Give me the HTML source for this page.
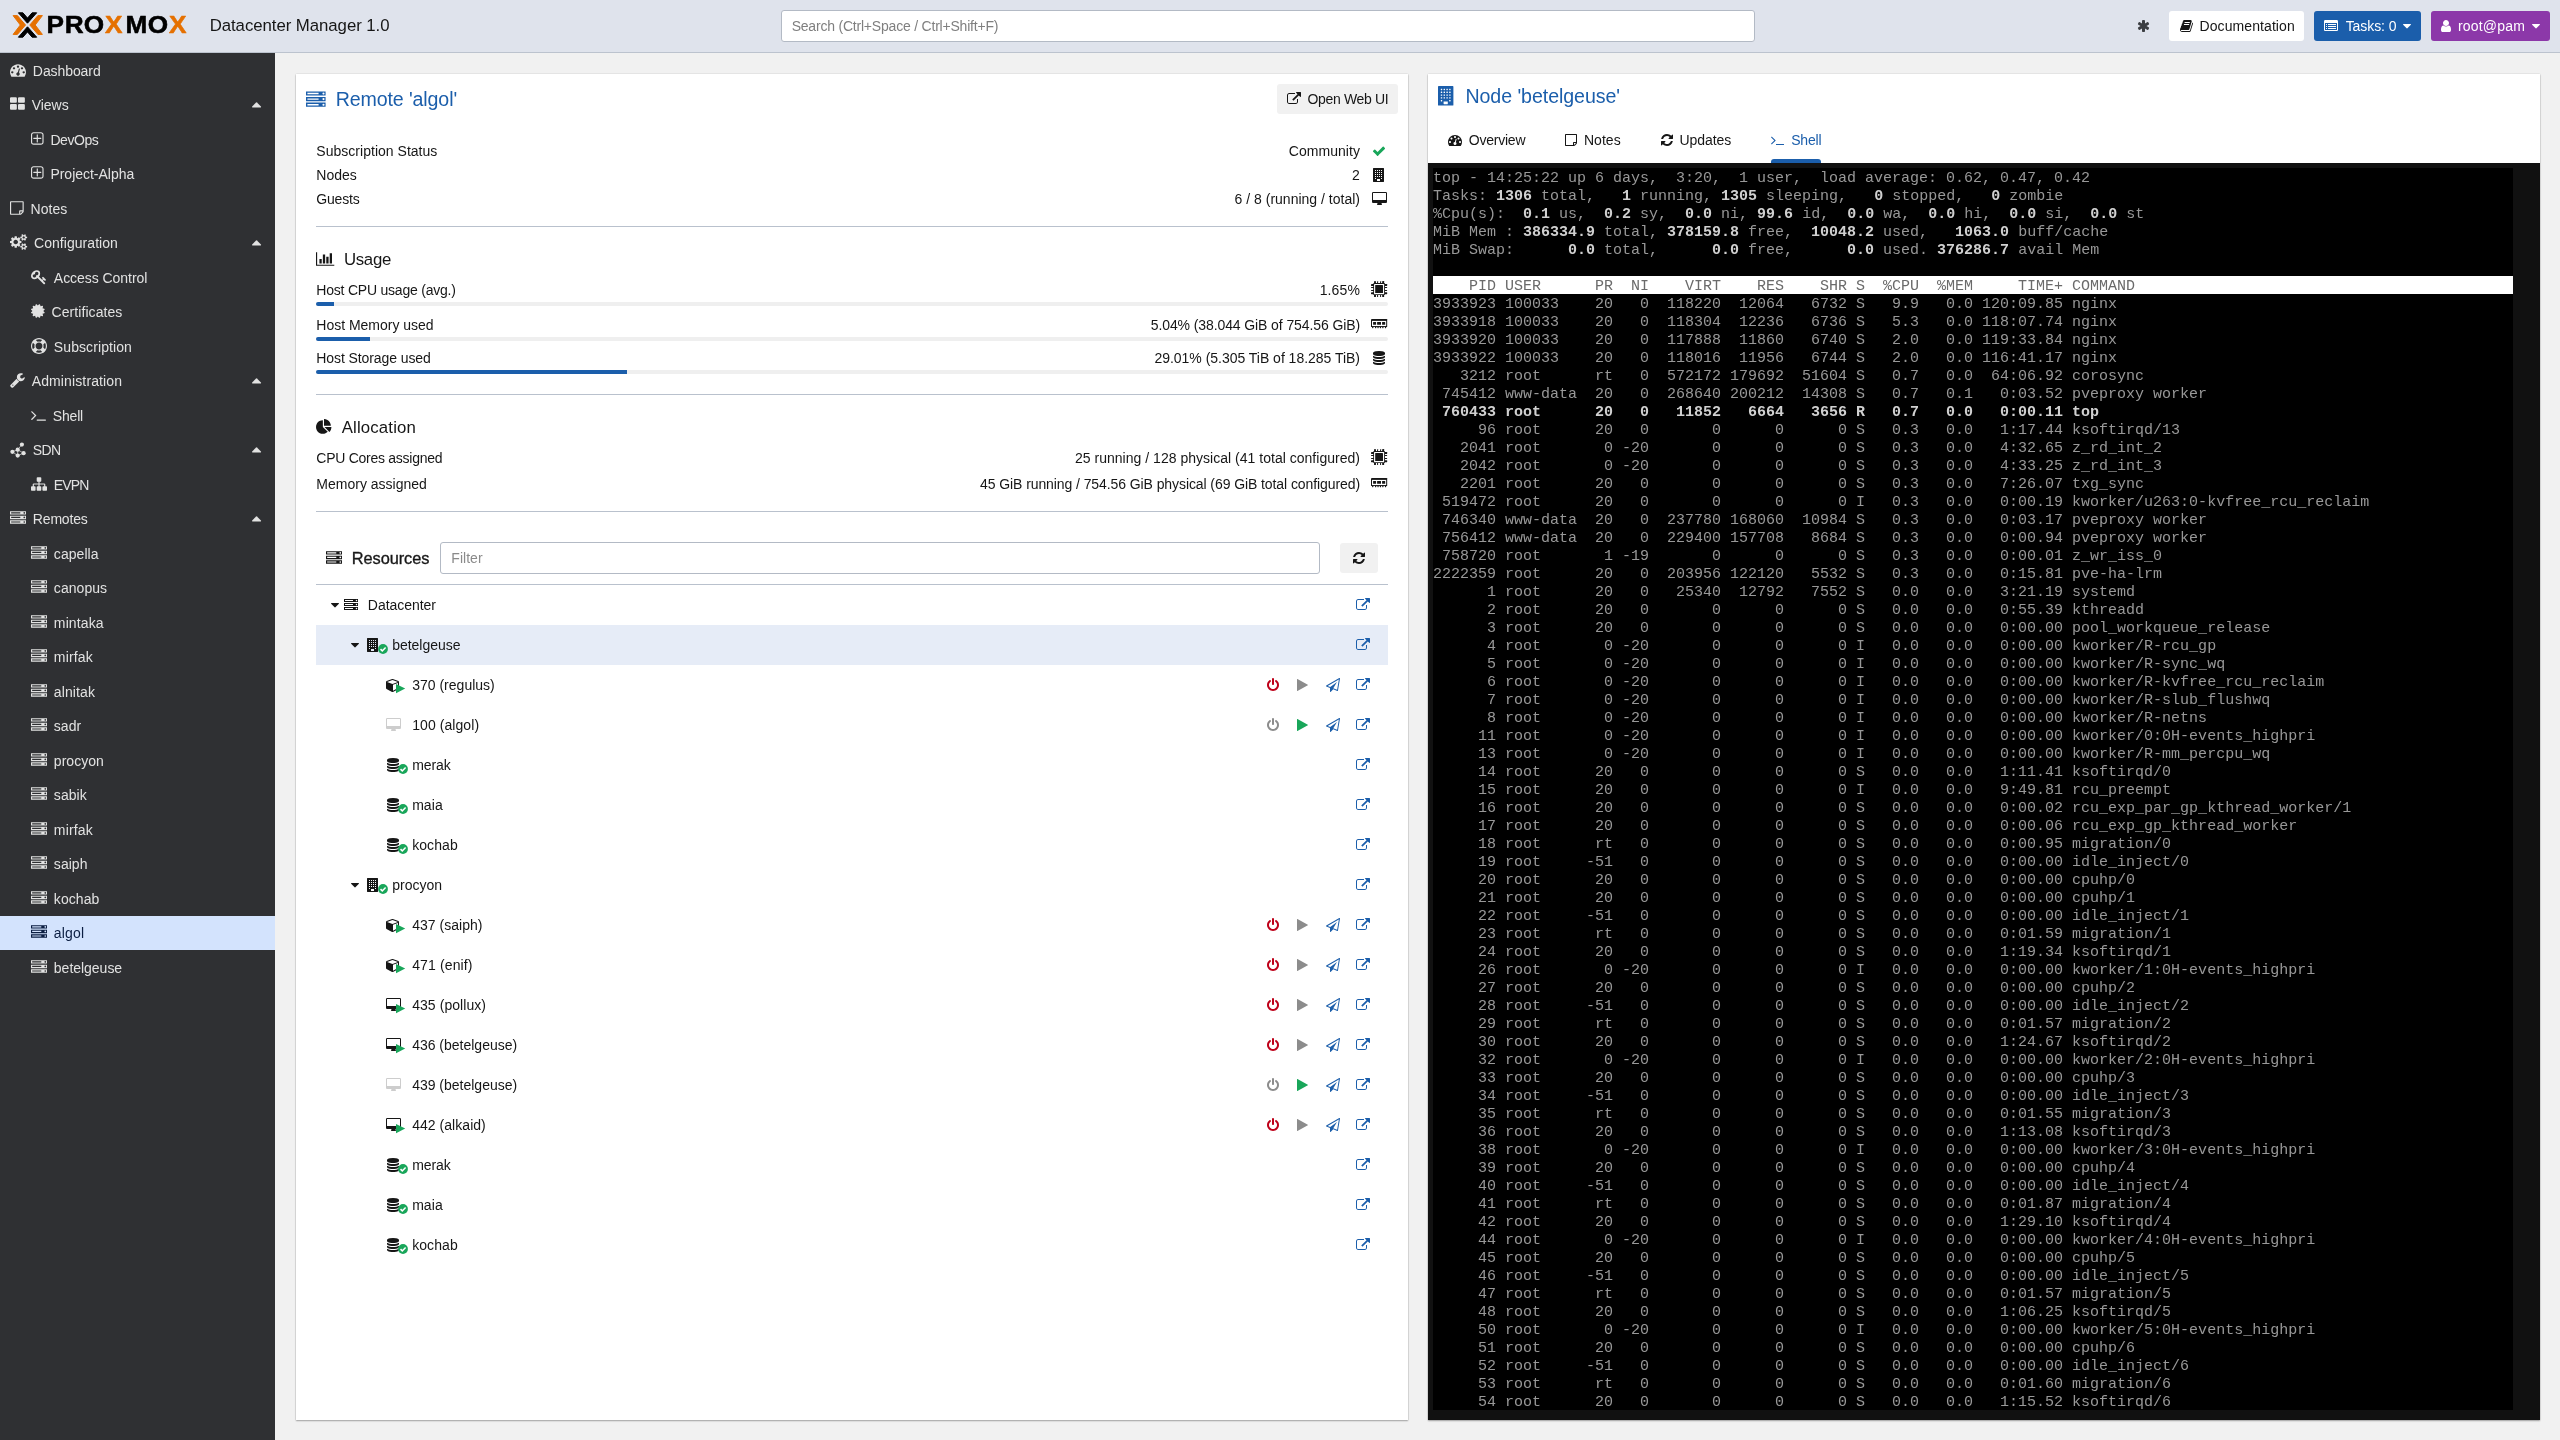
<!DOCTYPE html><html lang="en"><head><meta charset="utf-8"><title>Proxmox Datacenter Manager</title><style>
*{box-sizing:border-box;margin:0;padding:0}
html,body{width:2560px;height:1440px;overflow:hidden}
body{position:relative;background:#f1f1f1;font-family:"Liberation Sans",sans-serif;font-size:14px;color:#161616;line-height:20px}
#hdr,#side,.panel{will-change:opacity}
.i{display:block;fill:currentColor;flex:none;overflow:visible}
.abs,.abs>*{position:absolute}
.abs>*{white-space:pre}
#hdrbg{position:absolute;left:0;top:0;width:2560px;height:53px;background:#dfe3ec;border-bottom:1px solid #bcc3ce}
#hdr{position:absolute;left:0;top:0;width:2560px;height:53px}
#sidebg{position:absolute;left:0;top:53px;width:275px;height:1387px;background:#2f3033}
#side{position:absolute;left:0;top:53px;width:275px;height:1387px;color:#e2e2e2}
.panel{position:absolute;background:#fff;box-shadow:0 1px 1.5px rgba(0,0,0,.3),0 0 1.2px rgba(0,0,0,.22)}
.hr{height:1px;background:#b9c1cd;left:20px;width:1072px}
.bar{height:4px;border-radius:2px;background:#efefef;left:20px;width:1072px;overflow:hidden}
.bar>i{display:block;height:4px;background:#1b5eab}
.btn{border-radius:3px;display:block}
.blue{color:#1b5eab}
.c{transform:translate(.35px,-50%)}
.r{transform:translate(-100%,-50%)}
.m{transform:translate(-50%,-50%)}
#term{position:absolute;left:0;top:89px;width:1112px;height:1256.7px;background:#111}
#term .tt{position:absolute;left:5px;top:5px;width:1080px;height:1242px;background:#000;color:#fff;font-family:"Liberation Mono",monospace;font-size:15px;line-height:18px;white-space:pre;overflow:hidden}
#term .tt{color:#989898}
#term .tt b{font-weight:700;color:#d0d0d0}
#term .tt>div{height:18px}
#term .tt>div>span{position:relative;top:2px;display:block;height:18px}
#term .tt>div.h{background:#fff;color:#6a6a6a}
</style></head><body>
<div id="hdrbg"></div><div id="sidebg"></div>
<header id="hdr" class="abs">
<svg style="left:12px;top:11px;width:177px;height:28px" viewBox="12 11 177 28">
<g fill="#e57000" stroke="#e57000" stroke-width="1" stroke-linejoin="round"><path d="M13.1 15.6h4.3l8.1 9.4-8.1 9.4h-4.3l7.2-9.4z"/><path d="M42.4 15.6h-4.5l-8.1 9.4 8.1 9.4h4.5l-7.2-9.4z"/></g>
<g fill="#000" stroke="#000" stroke-width="1" stroke-linejoin="round"><path d="M18.4 12.8h4.5l4.6 5.3 4.6-5.3h4.6l-9.2 10.4z"/><path d="M18.4 37.2h4.5l4.6-5.3 4.6 5.3h4.6l-9.2-10.4z"/></g>
<linearGradient id="pg" gradientUnits="userSpaceOnUse" x1="0" y1="0" x2="200" y2="0"><stop offset="0" stop-color="#000"/><stop offset=".4723" stop-color="#000"/><stop offset=".4723" stop-color="#e57000"/><stop offset=".5677" stop-color="#e57000"/><stop offset=".5677" stop-color="#000"/><stop offset=".7614" stop-color="#000"/><stop offset=".7614" stop-color="#e57000"/><stop offset="1" stop-color="#e57000"/></linearGradient>
<text transform="scale(1.1 1)" x="42.3 58.95 76.09 95.44 114.18 134.27 153.75" y="33" font-family="Liberation Sans, sans-serif" font-weight="700" font-size="23.8" fill="url(#pg)" stroke="url(#pg)" stroke-width=".5" stroke-linejoin="round">PROXMOX</text></svg>
<div class="c" style="left:209.3px;top:26px;font-size:16.8px"><span style="letter-spacing:-0.050px;">Datacenter Manager 1.0</span></div>
<div style="left:781px;top:10px;width:974px;height:32px;background:#fff;border:1px solid #b3bac5;border-radius:3px"></div>
<div class="c" style="left:791.3px;top:26px;font-size:14px;color:#7f7f7f"><span style="letter-spacing:-0.205px;">Search (Ctrl+Space / Ctrl+Shift+F)</span></div>
<svg class="i" style="width:13.00px;height:14px;left:2137.2px;top:19.3px;color:#3b3e42" viewBox="0 -1536 1664 1792"><path transform="scale(1,-1)" d="M1482 486q46 -26 59.5 -77.5t-12.5 -97.5l-64 -110q-26 -46 -77.5 -59.5t-97.5 12.5l-266 153v-307q0 -52 -38 -90t-90 -38h-128q-52 0 -90 38t-38 90v307l-266 -153q-46 -26 -97.5 -12.5t-77.5 59.5l-64 110q-26 46 -12.5 97.5t59.5 77.5l266 154l-266 154 q-46 26 -59.5 77.5t12.5 97.5l64 110q26 46 77.5 59.5t97.5 -12.5l266 -153v307q0 52 38 90t90 38h128q52 0 90 -38t38 -90v-307l266 153q46 26 97.5 12.5t77.5 -59.5l64 -110q26 -46 12.5 -97.5t-59.5 -77.5l-266 -154z"/></svg>
<div class="btn" style="left:2169px;top:11px;width:135px;height:30px;background:#fff"></div>
<svg class="i" style="width:13.00px;height:14px;left:2179.6px;top:19px" viewBox="0 -1536 1664 1792"><path transform="scale(1,-1)" d="M1639 1058q40 -57 18 -129l-275 -906q-19 -64 -76.5 -107.5t-122.5 -43.5h-923q-77 0 -148.5 53.5t-99.5 131.5q-24 67 -2 127q0 4 3 27t4 37q1 8 -3 21.5t-3 19.5q2 11 8 21t16.5 23.5t16.5 23.5q23 38 45 91.5t30 91.5q3 10 0.5 30t-0.5 28q3 11 17 28t17 23 q21 36 42 92t25 90q1 9 -2.5 32t0.5 28q4 13 22 30.5t22 22.5q19 26 42.5 84.5t27.5 96.5q1 8 -3 25.5t-2 26.5q2 8 9 18t18 23t17 21q8 12 16.5 30.5t15 35t16 36t19.5 32t26.5 23.5t36 11.5t47.5 -5.5l-1 -3q38 9 51 9h761q74 0 114 -56t18 -130l-274 -906 q-36 -119 -71.5 -153.5t-128.5 -34.5h-869q-27 0 -38 -15q-11 -16 -1 -43q24 -70 144 -70h923q29 0 56 15.5t35 41.5l300 987q7 22 5 57q38 -15 59 -43zM575 1056q-4 -13 2 -22.5t20 -9.5h608q13 0 25.5 9.5t16.5 22.5l21 64q4 13 -2 22.5t-20 9.5h-608q-13 0 -25.5 -9.5 t-16.5 -22.5zM492 800q-4 -13 2 -22.5t20 -9.5h608q13 0 25.5 9.5t16.5 22.5l21 64q4 13 -2 22.5t-20 9.5h-608q-13 0 -25.5 -9.5t-16.5 -22.5z"/></svg>
<div class="c" style="left:2199.2px;top:26px"><span style="letter-spacing:0.084px;">Documentation</span></div>
<div class="btn" style="left:2314px;top:11px;width:107px;height:30px;background:#1b5eab"></div>
<svg class="i" style="width:14.00px;height:14px;left:2324.2px;top:19px;color:#fff" viewBox="0 -1536 1792 1792"><path transform="scale(1,-1)" d="M384 352v-64q0 -13 -9.5 -22.5t-22.5 -9.5h-64q-13 0 -22.5 9.5t-9.5 22.5v64q0 13 9.5 22.5t22.5 9.5h64q13 0 22.5 -9.5t9.5 -22.5zM384 608v-64q0 -13 -9.5 -22.5t-22.5 -9.5h-64q-13 0 -22.5 9.5t-9.5 22.5v64q0 13 9.5 22.5t22.5 9.5h64q13 0 22.5 -9.5t9.5 -22.5z M384 864v-64q0 -13 -9.5 -22.5t-22.5 -9.5h-64q-13 0 -22.5 9.5t-9.5 22.5v64q0 13 9.5 22.5t22.5 9.5h64q13 0 22.5 -9.5t9.5 -22.5zM1536 352v-64q0 -13 -9.5 -22.5t-22.5 -9.5h-960q-13 0 -22.5 9.5t-9.5 22.5v64q0 13 9.5 22.5t22.5 9.5h960q13 0 22.5 -9.5t9.5 -22.5z M1536 608v-64q0 -13 -9.5 -22.5t-22.5 -9.5h-960q-13 0 -22.5 9.5t-9.5 22.5v64q0 13 9.5 22.5t22.5 9.5h960q13 0 22.5 -9.5t9.5 -22.5zM1536 864v-64q0 -13 -9.5 -22.5t-22.5 -9.5h-960q-13 0 -22.5 9.5t-9.5 22.5v64q0 13 9.5 22.5t22.5 9.5h960q13 0 22.5 -9.5 t9.5 -22.5zM1664 160v832q0 13 -9.5 22.5t-22.5 9.5h-1472q-13 0 -22.5 -9.5t-9.5 -22.5v-832q0 -13 9.5 -22.5t22.5 -9.5h1472q13 0 22.5 9.5t9.5 22.5zM1792 1248v-1088q0 -66 -47 -113t-113 -47h-1472q-66 0 -113 47t-47 113v1088q0 66 47 113t113 47h1472q66 0 113 -47 t47 -113z"/></svg>
<div class="c" style="left:2345.3px;top:26px;color:#fff"><span style="letter-spacing:-0.068px;">Tasks: 0</span></div>
<svg class="i" style="width:8.00px;height:14px;left:2403.3px;top:19px;color:#fff" viewBox="0 -1536 1024 1792"><path transform="scale(1,-1)" d="M1024 832q0 -26 -19 -45l-448 -448q-19 -19 -45 -19t-45 19l-448 448q-19 19 -19 45t19 45t45 19h896q26 0 45 -19t19 -45z"/></svg>
<div class="btn" style="left:2431px;top:11px;width:119px;height:30px;background:#8c38a9"></div>
<svg class="i" style="width:10.00px;height:14px;left:2440.8px;top:19px;color:#fff" viewBox="0 -1536 1280 1792"><path transform="scale(1,-1)" d="M1280 137q0 -109 -62.5 -187t-150.5 -78h-854q-88 0 -150.5 78t-62.5 187q0 85 8.5 160.5t31.5 152t58.5 131t94 89t134.5 34.5q131 -128 313 -128t313 128q76 0 134.5 -34.5t94 -89t58.5 -131t31.5 -152t8.5 -160.5zM1024 1024q0 -159 -112.5 -271.5t-271.5 -112.5 t-271.5 112.5t-112.5 271.5t112.5 271.5t271.5 112.5t271.5 -112.5t112.5 -271.5z"/></svg>
<div class="c" style="left:2457.6px;top:26px;color:#fff"><span style="letter-spacing:0.182px;">root@pam</span></div>
<svg class="i" style="width:8.00px;height:14px;left:2532.2px;top:19px;color:#fff" viewBox="0 -1536 1024 1792"><path transform="scale(1,-1)" d="M1024 832q0 -26 -19 -45l-448 -448q-19 -19 -45 -19t-45 19l-448 448q-19 19 -19 45t19 45t45 19h896q26 0 45 -19t19 -45z"/></svg>
</header>
<nav id="side" class="abs">
<svg class="i" style="width:16.00px;height:16px;left:10px;top:8.80px;" viewBox="0 -1536 1792 1792"><path transform="scale(1,-1)" d="M384 384q0 53 -37.5 90.5t-90.5 37.5t-90.5 -37.5t-37.5 -90.5t37.5 -90.5t90.5 -37.5t90.5 37.5t37.5 90.5zM576 832q0 53 -37.5 90.5t-90.5 37.5t-90.5 -37.5t-37.5 -90.5t37.5 -90.5t90.5 -37.5t90.5 37.5t37.5 90.5zM1004 351l101 382q6 26 -7.5 48.5t-38.5 29.5 t-48 -6.5t-30 -39.5l-101 -382q-60 -5 -107 -43.5t-63 -98.5q-20 -77 20 -146t117 -89t146 20t89 117q16 60 -6 117t-72 91zM1664 384q0 53 -37.5 90.5t-90.5 37.5t-90.5 -37.5t-37.5 -90.5t37.5 -90.5t90.5 -37.5t90.5 37.5t37.5 90.5zM1024 1024q0 53 -37.5 90.5 t-90.5 37.5t-90.5 -37.5t-37.5 -90.5t37.5 -90.5t90.5 -37.5t90.5 37.5t37.5 90.5zM1472 832q0 53 -37.5 90.5t-90.5 37.5t-90.5 -37.5t-37.5 -90.5t37.5 -90.5t90.5 -37.5t90.5 37.5t37.5 90.5zM1792 384q0 -261 -141 -483q-19 -29 -54 -29h-1402q-35 0 -54 29 q-141 221 -141 483q0 182 71 348t191 286t286 191t348 71t348 -71t286 -191t191 -286t71 -348z"/></svg>
<div class="c" style="left:32.50px;top:17.50px;"><span style="letter-spacing:-0.082px;">Dashboard</span></div>
<svg class="i" style="width:14.86px;height:16px;left:10px;top:43.30px;" viewBox="0 -1536 1664 1792"><path transform="scale(1,-1)" d="M768 512v-384q0 -52 -38 -90t-90 -38h-512q-52 0 -90 38t-38 90v384q0 52 38 90t90 38h512q52 0 90 -38t38 -90zM768 1280v-384q0 -52 -38 -90t-90 -38h-512q-52 0 -90 38t-38 90v384q0 52 38 90t90 38h512q52 0 90 -38t38 -90zM1664 512v-384q0 -52 -38 -90t-90 -38 h-512q-52 0 -90 38t-38 90v384q0 52 38 90t90 38h512q52 0 90 -38t38 -90zM1664 1280v-384q0 -52 -38 -90t-90 -38h-512q-52 0 -90 38t-38 90v384q0 52 38 90t90 38h512q52 0 90 -38t38 -90z"/></svg>
<div class="c" style="left:31.36px;top:52.00px;"><span style="letter-spacing:-0.028px;">Views</span></div>
<svg class="i" style="width:9.14px;height:16px;left:252px;top:43.10px" viewBox="0 -1536 1024 1792"><path transform="scale(1,-1)" d="M1024 320q0 -26 -19 -45t-45 -19h-896q-26 0 -45 19t-19 45t19 45l448 448q19 19 45 19t45 -19l448 -448q19 -19 19 -45z"/></svg>
<svg class="i" style="width:12.57px;height:16px;left:31px;top:77.80px;" viewBox="0 -1536 1408 1792"><path transform="scale(1,-1)" d="M1152 736v-64q0 -14 -9 -23t-23 -9h-352v-352q0 -14 -9 -23t-23 -9h-64q-14 0 -23 9t-9 23v352h-352q-14 0 -23 9t-9 23v64q0 14 9 23t23 9h352v352q0 14 9 23t23 9h64q14 0 23 -9t9 -23v-352h352q14 0 23 -9t9 -23zM1280 288v832q0 66 -47 113t-113 47h-832 q-66 0 -113 -47t-47 -113v-832q0 -66 47 -113t113 -47h832q66 0 113 47t47 113zM1408 1120v-832q0 -119 -84.5 -203.5t-203.5 -84.5h-832q-119 0 -203.5 84.5t-84.5 203.5v832q0 119 84.5 203.5t203.5 84.5h832q119 0 203.5 -84.5t84.5 -203.5z"/></svg>
<div class="c" style="left:50.07px;top:86.50px;"><span style="letter-spacing:-0.422px;">DevOps</span></div>
<svg class="i" style="width:12.57px;height:16px;left:31px;top:112.30px;" viewBox="0 -1536 1408 1792"><path transform="scale(1,-1)" d="M1152 736v-64q0 -14 -9 -23t-23 -9h-352v-352q0 -14 -9 -23t-23 -9h-64q-14 0 -23 9t-9 23v352h-352q-14 0 -23 9t-9 23v64q0 14 9 23t23 9h352v352q0 14 9 23t23 9h64q14 0 23 -9t9 -23v-352h352q14 0 23 -9t9 -23zM1280 288v832q0 66 -47 113t-113 47h-832 q-66 0 -113 -47t-47 -113v-832q0 -66 47 -113t113 -47h832q66 0 113 47t47 113zM1408 1120v-832q0 -119 -84.5 -203.5t-203.5 -84.5h-832q-119 0 -203.5 84.5t-84.5 203.5v832q0 119 84.5 203.5t203.5 84.5h832q119 0 203.5 -84.5t84.5 -203.5z"/></svg>
<div class="c" style="left:50.07px;top:121.00px;"><span style="letter-spacing:-0.020px;">Project-Alpha</span></div>
<svg class="i" style="width:13.71px;height:16px;left:10px;top:146.80px;" viewBox="0 -1536 1536 1792"><path transform="scale(1,-1)" d="M1400 256h-248v-248q29 10 41 22l185 185q12 12 22 41zM1120 384h288v896h-1280v-1280h896v288q0 40 28 68t68 28zM1536 1312v-1024q0 -40 -20 -88t-48 -76l-184 -184q-28 -28 -76 -48t-88 -20h-1024q-40 0 -68 28t-28 68v1344q0 40 28 68t68 28h1344q40 0 68 -28t28 -68 z"/></svg>
<div class="c" style="left:30.21px;top:155.50px;"><span style="letter-spacing:0.028px;">Notes</span></div>
<svg class="i" style="width:17.14px;height:16px;left:10px;top:181.30px;" viewBox="0 -1536 1920 1792"><path transform="scale(1,-1)" d="M896 640q0 106 -75 181t-181 75t-181 -75t-75 -181t75 -181t181 -75t181 75t75 181zM1664 128q0 52 -38 90t-90 38t-90 -38t-38 -90q0 -53 37.5 -90.5t90.5 -37.5t90.5 37.5t37.5 90.5zM1664 1152q0 52 -38 90t-90 38t-90 -38t-38 -90q0 -53 37.5 -90.5t90.5 -37.5 t90.5 37.5t37.5 90.5zM1280 731v-185q0 -10 -7 -19.5t-16 -10.5l-155 -24q-11 -35 -32 -76q34 -48 90 -115q7 -11 7 -20q0 -12 -7 -19q-23 -30 -82.5 -89.5t-78.5 -59.5q-11 0 -21 7l-115 90q-37 -19 -77 -31q-11 -108 -23 -155q-7 -24 -30 -24h-186q-11 0 -20 7.5t-10 17.5 l-23 153q-34 10 -75 31l-118 -89q-7 -7 -20 -7q-11 0 -21 8q-144 133 -144 160q0 9 7 19q10 14 41 53t47 61q-23 44 -35 82l-152 24q-10 1 -17 9.5t-7 19.5v185q0 10 7 19.5t16 10.5l155 24q11 35 32 76q-34 48 -90 115q-7 11 -7 20q0 12 7 20q22 30 82 89t79 59q11 0 21 -7 l115 -90q34 18 77 32q11 108 23 154q7 24 30 24h186q11 0 20 -7.5t10 -17.5l23 -153q34 -10 75 -31l118 89q8 7 20 7q11 0 21 -8q144 -133 144 -160q0 -8 -7 -19q-12 -16 -42 -54t-45 -60q23 -48 34 -82l152 -23q10 -2 17 -10.5t7 -19.5zM1920 198v-140q0 -16 -149 -31 q-12 -27 -30 -52q51 -113 51 -138q0 -4 -4 -7q-122 -71 -124 -71q-8 0 -46 47t-52 68q-20 -2 -30 -2t-30 2q-14 -21 -52 -68t-46 -47q-2 0 -124 71q-4 3 -4 7q0 25 51 138q-18 25 -30 52q-149 15 -149 31v140q0 16 149 31q13 29 30 52q-51 113 -51 138q0 4 4 7q4 2 35 20 t59 34t30 16q8 0 46 -46.5t52 -67.5q20 2 30 2t30 -2q51 71 92 112l6 2q4 0 124 -70q4 -3 4 -7q0 -25 -51 -138q17 -23 30 -52q149 -15 149 -31zM1920 1222v-140q0 -16 -149 -31q-12 -27 -30 -52q51 -113 51 -138q0 -4 -4 -7q-122 -71 -124 -71q-8 0 -46 47t-52 68 q-20 -2 -30 -2t-30 2q-14 -21 -52 -68t-46 -47q-2 0 -124 71q-4 3 -4 7q0 25 51 138q-18 25 -30 52q-149 15 -149 31v140q0 16 149 31q13 29 30 52q-51 113 -51 138q0 4 4 7q4 2 35 20t59 34t30 16q8 0 46 -46.5t52 -67.5q20 2 30 2t30 -2q51 71 92 112l6 2q4 0 124 -70 q4 -3 4 -7q0 -25 -51 -138q17 -23 30 -52q149 -15 149 -31z"/></svg>
<div class="c" style="left:33.64px;top:190.00px;"><span style="letter-spacing:0.053px;">Configuration</span></div>
<svg class="i" style="width:9.14px;height:16px;left:252px;top:181.10px" viewBox="0 -1536 1024 1792"><path transform="scale(1,-1)" d="M1024 320q0 -26 -19 -45t-45 -19h-896q-26 0 -45 19t-19 45t19 45l448 448q19 19 45 19t45 -19l448 -448q19 -19 19 -45z"/></svg>
<svg class="i" style="width:16.00px;height:16px;left:31px;top:215.80px;" viewBox="0 -1536 1792 1792"><path transform="scale(1,-1)" d="M832 1024q0 80 -56 136t-136 56t-136 -56t-56 -136q0 -42 19 -83q-41 19 -83 19q-80 0 -136 -56t-56 -136t56 -136t136 -56t136 56t56 136q0 42 -19 83q41 -19 83 -19q80 0 136 56t56 136zM1683 320q0 -17 -49 -66t-66 -49q-9 0 -28.5 16t-36.5 33t-38.5 40t-24.5 26 l-96 -96l220 -220q28 -28 28 -68q0 -42 -39 -81t-81 -39q-40 0 -68 28l-671 671q-176 -131 -365 -131q-163 0 -265.5 102.5t-102.5 265.5q0 160 95 313t248 248t313 95q163 0 265.5 -102.5t102.5 -265.5q0 -189 -131 -365l355 -355l96 96q-3 3 -26 24.5t-40 38.5t-33 36.5 t-16 28.5q0 17 49 66t66 49q13 0 23 -10q6 -6 46 -44.5t82 -79.5t86.5 -86t73 -78t28.5 -41z"/></svg>
<div class="c" style="left:53.50px;top:224.50px;"><span style="letter-spacing:-0.049px;">Access Control</span></div>
<svg class="i" style="width:13.71px;height:16px;left:31px;top:250.30px;" viewBox="0 -1536 1536 1792"><path transform="scale(1,-1)" d="M1376 640l138 -135q30 -28 20 -70q-12 -41 -52 -51l-188 -48l53 -186q12 -41 -19 -70q-29 -31 -70 -19l-186 53l-48 -188q-10 -40 -51 -52q-12 -2 -19 -2q-31 0 -51 22l-135 138l-135 -138q-28 -30 -70 -20q-41 11 -51 52l-48 188l-186 -53q-41 -12 -70 19q-31 29 -19 70 l53 186l-188 48q-40 10 -52 51q-10 42 20 70l138 135l-138 135q-30 28 -20 70q12 41 52 51l188 48l-53 186q-12 41 19 70q29 31 70 19l186 -53l48 188q10 41 51 51q41 12 70 -19l135 -139l135 139q29 30 70 19q41 -10 51 -51l48 -188l186 53q41 12 70 -19q31 -29 19 -70 l-53 -186l188 -48q40 -10 52 -51q10 -42 -20 -70z"/></svg>
<div class="c" style="left:51.21px;top:259.00px;"><span style="letter-spacing:0.072px;">Certificates</span></div>
<svg class="i" style="width:16.00px;height:16px;left:31px;top:284.80px;" viewBox="0 -1536 1792 1792"><path transform="scale(1,-1)" d="M896 1536q182 0 348 -71t286 -191t191 -286t71 -348t-71 -348t-191 -286t-286 -191t-348 -71t-348 71t-286 191t-191 286t-71 348t71 348t191 286t286 191t348 71zM896 1408q-190 0 -361 -90l194 -194q82 28 167 28t167 -28l194 194q-171 90 -361 90zM218 279l194 194 q-28 82 -28 167t28 167l-194 194q-90 -171 -90 -361t90 -361zM896 -128q190 0 361 90l-194 194q-82 -28 -167 -28t-167 28l-194 -194q171 -90 361 -90zM896 256q159 0 271.5 112.5t112.5 271.5t-112.5 271.5t-271.5 112.5t-271.5 -112.5t-112.5 -271.5t112.5 -271.5 t271.5 -112.5zM1380 473l194 -194q90 171 90 361t-90 361l-194 -194q28 -82 28 -167t-28 -167z"/></svg>
<div class="c" style="left:53.50px;top:293.50px;"><span style="letter-spacing:0.089px;">Subscription</span></div>
<svg class="i" style="width:14.86px;height:16px;left:10px;top:319.30px;" viewBox="0 -1536 1664 1792"><path transform="scale(1,-1)" d="M384 64q0 26 -19 45t-45 19t-45 -19t-19 -45t19 -45t45 -19t45 19t19 45zM1028 484l-682 -682q-37 -37 -90 -37q-52 0 -91 37l-106 108q-38 36 -38 90q0 53 38 91l681 681q39 -98 114.5 -173.5t173.5 -114.5zM1662 919q0 -39 -23 -106q-47 -134 -164.5 -217.5 t-258.5 -83.5q-185 0 -316.5 131.5t-131.5 316.5t131.5 316.5t316.5 131.5q58 0 121.5 -16.5t107.5 -46.5q16 -11 16 -28t-16 -28l-293 -169v-224l193 -107q5 3 79 48.5t135.5 81t70.5 35.5q15 0 23.5 -10t8.5 -25z"/></svg>
<div class="c" style="left:31.36px;top:328.00px;"><span style="letter-spacing:0.124px;">Administration</span></div>
<svg class="i" style="width:9.14px;height:16px;left:252px;top:319.10px" viewBox="0 -1536 1024 1792"><path transform="scale(1,-1)" d="M1024 320q0 -26 -19 -45t-45 -19h-896q-26 0 -45 19t-19 45t19 45l448 448q19 19 45 19t45 -19l448 -448q19 -19 19 -45z"/></svg>
<svg class="i" style="width:14.86px;height:16px;left:31px;top:353.80px;" viewBox="0 -1536 1664 1792"><path transform="scale(1,-1)" d="M585 553l-466 -466q-10 -10 -23 -10t-23 10l-50 50q-10 10 -10 23t10 23l393 393l-393 393q-10 10 -10 23t10 23l50 50q10 10 23 10t23 -10l466 -466q10 -10 10 -23t-10 -23zM1664 96v-64q0 -14 -9 -23t-23 -9h-960q-14 0 -23 9t-9 23v64q0 14 9 23t23 9h960q14 0 23 -9 t9 -23z"/></svg>
<div class="c" style="left:52.36px;top:362.50px;"><span style="letter-spacing:-0.153px;">Shell</span></div>
<svg class="i" style="width:16px;height:16px;left:10px;top:388.60px;" viewBox="0 0 16 16"><line x1="11.9" y1="2.6" x2="7.7" y2="7.7" stroke="currentColor" stroke-width=".7"/><line x1="7.7" y1="7.7" x2="2.4" y2="9.8" stroke="currentColor" stroke-width=".7"/><line x1="7.7" y1="7.7" x2="13.6" y2="11.2" stroke="currentColor" stroke-width=".7"/><line x1="7.7" y1="7.7" x2="7.7" y2="13.6" stroke="currentColor" stroke-width=".7"/><line x1="2.4" y1="9.8" x2="7.7" y2="13.6" stroke="currentColor" stroke-width=".7"/><line x1="13.6" y1="11.2" x2="7.7" y2="13.6" stroke="currentColor" stroke-width=".7"/><circle cx="11.9" cy="2.6" r="2.1"/><circle cx="7.7" cy="7.7" r="2.1"/><circle cx="2.4" cy="9.8" r="2.1"/><circle cx="13.6" cy="11.2" r="2.1"/><circle cx="7.7" cy="13.6" r="2.1"/></svg>
<div class="c" style="left:32.50px;top:397.00px;"><span style="letter-spacing:-0.625px;">SDN</span></div>
<svg class="i" style="width:9.14px;height:16px;left:252px;top:388.10px" viewBox="0 -1536 1024 1792"><path transform="scale(1,-1)" d="M1024 320q0 -26 -19 -45t-45 -19h-896q-26 0 -45 19t-19 45t19 45l448 448q19 19 45 19t45 -19l448 -448q19 -19 19 -45z"/></svg>
<svg class="i" style="width:16.00px;height:16px;left:31px;top:422.80px;" viewBox="0 -1536 1792 1792"><path transform="scale(1,-1)" d="M1792 288v-320q0 -40 -28 -68t-68 -28h-320q-40 0 -68 28t-28 68v320q0 40 28 68t68 28h96v192h-512v-192h96q40 0 68 -28t28 -68v-320q0 -40 -28 -68t-68 -28h-320q-40 0 -68 28t-28 68v320q0 40 28 68t68 28h96v192h-512v-192h96q40 0 68 -28t28 -68v-320 q0 -40 -28 -68t-68 -28h-320q-40 0 -68 28t-28 68v320q0 40 28 68t68 28h96v192q0 52 38 90t90 38h512v192h-96q-40 0 -68 28t-28 68v320q0 40 28 68t68 28h320q40 0 68 -28t28 -68v-320q0 -40 -28 -68t-68 -28h-96v-192h512q52 0 90 -38t38 -90v-192h96q40 0 68 -28t28 -68 z"/></svg>
<div class="c" style="left:53.50px;top:431.50px;"><span style="letter-spacing:-0.844px;">EVPN</span></div>
<svg class="i" style="width:16.00px;height:16px;left:10px;top:457.30px;" viewBox="0 -1536 1792 1792"><path transform="scale(1,-1)" d="M128 128h1024v128h-1024v-128zM128 640h1024v128h-1024v-128zM1696 192q0 40 -28 68t-68 28t-68 -28t-28 -68t28 -68t68 -28t68 28t28 68zM128 1152h1024v128h-1024v-128zM1696 704q0 40 -28 68t-68 28t-68 -28t-28 -68t28 -68t68 -28t68 28t28 68zM1696 1216 q0 40 -28 68t-68 28t-68 -28t-28 -68t28 -68t68 -28t68 28t28 68zM1792 384v-384h-1792v384h1792zM1792 896v-384h-1792v384h1792zM1792 1408v-384h-1792v384h1792z"/></svg>
<div class="c" style="left:32.50px;top:466.00px;"><span style="letter-spacing:-0.179px;">Remotes</span></div>
<svg class="i" style="width:9.14px;height:16px;left:252px;top:457.10px" viewBox="0 -1536 1024 1792"><path transform="scale(1,-1)" d="M1024 320q0 -26 -19 -45t-45 -19h-896q-26 0 -45 19t-19 45t19 45l448 448q19 19 45 19t45 -19l448 -448q19 -19 19 -45z"/></svg>
<svg class="i" style="width:16.00px;height:16px;left:31px;top:491.80px;" viewBox="0 -1536 1792 1792"><path transform="scale(1,-1)" d="M128 128h1024v128h-1024v-128zM128 640h1024v128h-1024v-128zM1696 192q0 40 -28 68t-68 28t-68 -28t-28 -68t28 -68t68 -28t68 28t28 68zM128 1152h1024v128h-1024v-128zM1696 704q0 40 -28 68t-68 28t-68 -28t-28 -68t28 -68t68 -28t68 28t28 68zM1696 1216 q0 40 -28 68t-68 28t-68 -28t-28 -68t28 -68t68 -28t68 28t28 68zM1792 384v-384h-1792v384h1792zM1792 896v-384h-1792v384h1792zM1792 1408v-384h-1792v384h1792z"/></svg>
<div class="c" style="left:53.50px;top:500.50px;"><span style="letter-spacing:0.042px;">capella</span></div>
<svg class="i" style="width:16.00px;height:16px;left:31px;top:526.30px;" viewBox="0 -1536 1792 1792"><path transform="scale(1,-1)" d="M128 128h1024v128h-1024v-128zM128 640h1024v128h-1024v-128zM1696 192q0 40 -28 68t-68 28t-68 -28t-28 -68t28 -68t68 -28t68 28t28 68zM128 1152h1024v128h-1024v-128zM1696 704q0 40 -28 68t-68 28t-68 -28t-28 -68t28 -68t68 -28t68 28t28 68zM1696 1216 q0 40 -28 68t-68 28t-68 -28t-28 -68t28 -68t68 -28t68 28t28 68zM1792 384v-384h-1792v384h1792zM1792 896v-384h-1792v384h1792zM1792 1408v-384h-1792v384h1792z"/></svg>
<div class="c" style="left:53.50px;top:535.00px;"><span style="letter-spacing:0.047px;">canopus</span></div>
<svg class="i" style="width:16.00px;height:16px;left:31px;top:560.80px;" viewBox="0 -1536 1792 1792"><path transform="scale(1,-1)" d="M128 128h1024v128h-1024v-128zM128 640h1024v128h-1024v-128zM1696 192q0 40 -28 68t-68 28t-68 -28t-28 -68t28 -68t68 -28t68 28t28 68zM128 1152h1024v128h-1024v-128zM1696 704q0 40 -28 68t-68 28t-68 -28t-28 -68t28 -68t68 -28t68 28t28 68zM1696 1216 q0 40 -28 68t-68 28t-68 -28t-28 -68t28 -68t68 -28t68 28t28 68zM1792 384v-384h-1792v384h1792zM1792 896v-384h-1792v384h1792zM1792 1408v-384h-1792v384h1792z"/></svg>
<div class="c" style="left:53.50px;top:569.50px;"><span style="letter-spacing:0.118px;">mintaka</span></div>
<svg class="i" style="width:16.00px;height:16px;left:31px;top:595.30px;" viewBox="0 -1536 1792 1792"><path transform="scale(1,-1)" d="M128 128h1024v128h-1024v-128zM128 640h1024v128h-1024v-128zM1696 192q0 40 -28 68t-68 28t-68 -28t-28 -68t28 -68t68 -28t68 28t28 68zM128 1152h1024v128h-1024v-128zM1696 704q0 40 -28 68t-68 28t-68 -28t-28 -68t28 -68t68 -28t68 28t28 68zM1696 1216 q0 40 -28 68t-68 28t-68 -28t-28 -68t28 -68t68 -28t68 28t28 68zM1792 384v-384h-1792v384h1792zM1792 896v-384h-1792v384h1792zM1792 1408v-384h-1792v384h1792z"/></svg>
<div class="c" style="left:53.50px;top:604.00px;"><span style="letter-spacing:0.172px;">mirfak</span></div>
<svg class="i" style="width:16.00px;height:16px;left:31px;top:629.80px;" viewBox="0 -1536 1792 1792"><path transform="scale(1,-1)" d="M128 128h1024v128h-1024v-128zM128 640h1024v128h-1024v-128zM1696 192q0 40 -28 68t-68 28t-68 -28t-28 -68t28 -68t68 -28t68 28t28 68zM128 1152h1024v128h-1024v-128zM1696 704q0 40 -28 68t-68 28t-68 -28t-28 -68t28 -68t68 -28t68 28t28 68zM1696 1216 q0 40 -28 68t-68 28t-68 -28t-28 -68t28 -68t68 -28t68 28t28 68zM1792 384v-384h-1792v384h1792zM1792 896v-384h-1792v384h1792zM1792 1408v-384h-1792v384h1792z"/></svg>
<div class="c" style="left:53.50px;top:638.50px;"><span style="letter-spacing:0.105px;">alnitak</span></div>
<svg class="i" style="width:16.00px;height:16px;left:31px;top:664.30px;" viewBox="0 -1536 1792 1792"><path transform="scale(1,-1)" d="M128 128h1024v128h-1024v-128zM128 640h1024v128h-1024v-128zM1696 192q0 40 -28 68t-68 28t-68 -28t-28 -68t28 -68t68 -28t68 28t28 68zM128 1152h1024v128h-1024v-128zM1696 704q0 40 -28 68t-68 28t-68 -28t-28 -68t28 -68t68 -28t68 28t28 68zM1696 1216 q0 40 -28 68t-68 28t-68 -28t-28 -68t28 -68t68 -28t68 28t28 68zM1792 384v-384h-1792v384h1792zM1792 896v-384h-1792v384h1792zM1792 1408v-384h-1792v384h1792z"/></svg>
<div class="c" style="left:53.50px;top:673.00px;"><span style="">sadr</span></div>
<svg class="i" style="width:16.00px;height:16px;left:31px;top:698.80px;" viewBox="0 -1536 1792 1792"><path transform="scale(1,-1)" d="M128 128h1024v128h-1024v-128zM128 640h1024v128h-1024v-128zM1696 192q0 40 -28 68t-68 28t-68 -28t-28 -68t28 -68t68 -28t68 28t28 68zM128 1152h1024v128h-1024v-128zM1696 704q0 40 -28 68t-68 28t-68 -28t-28 -68t28 -68t68 -28t68 28t28 68zM1696 1216 q0 40 -28 68t-68 28t-68 -28t-28 -68t28 -68t68 -28t68 28t28 68zM1792 384v-384h-1792v384h1792zM1792 896v-384h-1792v384h1792zM1792 1408v-384h-1792v384h1792z"/></svg>
<div class="c" style="left:53.50px;top:707.50px;"><span style="letter-spacing:0.020px;">procyon</span></div>
<svg class="i" style="width:16.00px;height:16px;left:31px;top:733.30px;" viewBox="0 -1536 1792 1792"><path transform="scale(1,-1)" d="M128 128h1024v128h-1024v-128zM128 640h1024v128h-1024v-128zM1696 192q0 40 -28 68t-68 28t-68 -28t-28 -68t28 -68t68 -28t68 28t28 68zM128 1152h1024v128h-1024v-128zM1696 704q0 40 -28 68t-68 28t-68 -28t-28 -68t28 -68t68 -28t68 28t28 68zM1696 1216 q0 40 -28 68t-68 28t-68 -28t-28 -68t28 -68t68 -28t68 28t28 68zM1792 384v-384h-1792v384h1792zM1792 896v-384h-1792v384h1792zM1792 1408v-384h-1792v384h1792z"/></svg>
<div class="c" style="left:53.50px;top:742.00px;"><span style="letter-spacing:0.047px;">sabik</span></div>
<svg class="i" style="width:16.00px;height:16px;left:31px;top:767.80px;" viewBox="0 -1536 1792 1792"><path transform="scale(1,-1)" d="M128 128h1024v128h-1024v-128zM128 640h1024v128h-1024v-128zM1696 192q0 40 -28 68t-68 28t-68 -28t-28 -68t28 -68t68 -28t68 28t28 68zM128 1152h1024v128h-1024v-128zM1696 704q0 40 -28 68t-68 28t-68 -28t-28 -68t28 -68t68 -28t68 28t28 68zM1696 1216 q0 40 -28 68t-68 28t-68 -28t-28 -68t28 -68t68 -28t68 28t28 68zM1792 384v-384h-1792v384h1792zM1792 896v-384h-1792v384h1792zM1792 1408v-384h-1792v384h1792z"/></svg>
<div class="c" style="left:53.50px;top:776.50px;"><span style="letter-spacing:0.172px;">mirfak</span></div>
<svg class="i" style="width:16.00px;height:16px;left:31px;top:802.30px;" viewBox="0 -1536 1792 1792"><path transform="scale(1,-1)" d="M128 128h1024v128h-1024v-128zM128 640h1024v128h-1024v-128zM1696 192q0 40 -28 68t-68 28t-68 -28t-28 -68t28 -68t68 -28t68 28t28 68zM128 1152h1024v128h-1024v-128zM1696 704q0 40 -28 68t-68 28t-68 -28t-28 -68t28 -68t68 -28t68 28t28 68zM1696 1216 q0 40 -28 68t-68 28t-68 -28t-28 -68t28 -68t68 -28t68 28t28 68zM1792 384v-384h-1792v384h1792zM1792 896v-384h-1792v384h1792zM1792 1408v-384h-1792v384h1792z"/></svg>
<div class="c" style="left:53.50px;top:811.00px;"><span style="letter-spacing:0.041px;">saiph</span></div>
<svg class="i" style="width:16.00px;height:16px;left:31px;top:836.80px;" viewBox="0 -1536 1792 1792"><path transform="scale(1,-1)" d="M128 128h1024v128h-1024v-128zM128 640h1024v128h-1024v-128zM1696 192q0 40 -28 68t-68 28t-68 -28t-28 -68t28 -68t68 -28t68 28t28 68zM128 1152h1024v128h-1024v-128zM1696 704q0 40 -28 68t-68 28t-68 -28t-28 -68t28 -68t68 -28t68 28t28 68zM1696 1216 q0 40 -28 68t-68 28t-68 -28t-28 -68t28 -68t68 -28t68 28t28 68zM1792 384v-384h-1792v384h1792zM1792 896v-384h-1792v384h1792zM1792 1408v-384h-1792v384h1792z"/></svg>
<div class="c" style="left:53.50px;top:845.50px;"><span style="letter-spacing:0.076px;">kochab</span></div>
<div style="left:0;top:862.75px;width:275px;height:34.5px;background:#d3e3fd"></div>
<svg class="i" style="width:16.00px;height:16px;left:31px;top:871.30px;color:#0b1e42;" viewBox="0 -1536 1792 1792"><path transform="scale(1,-1)" d="M128 128h1024v128h-1024v-128zM128 640h1024v128h-1024v-128zM1696 192q0 40 -28 68t-68 28t-68 -28t-28 -68t28 -68t68 -28t68 28t28 68zM128 1152h1024v128h-1024v-128zM1696 704q0 40 -28 68t-68 28t-68 -28t-28 -68t28 -68t68 -28t68 28t28 68zM1696 1216 q0 40 -28 68t-68 28t-68 -28t-28 -68t28 -68t68 -28t68 28t28 68zM1792 384v-384h-1792v384h1792zM1792 896v-384h-1792v384h1792zM1792 1408v-384h-1792v384h1792z"/></svg>
<div class="c" style="left:53.50px;top:880.00px;color:#0b1e42;"><span style="letter-spacing:0.144px;">algol</span></div>
<svg class="i" style="width:16.00px;height:16px;left:31px;top:905.80px;" viewBox="0 -1536 1792 1792"><path transform="scale(1,-1)" d="M128 128h1024v128h-1024v-128zM128 640h1024v128h-1024v-128zM1696 192q0 40 -28 68t-68 28t-68 -28t-28 -68t28 -68t68 -28t68 28t28 68zM128 1152h1024v128h-1024v-128zM1696 704q0 40 -28 68t-68 28t-68 -28t-28 -68t28 -68t68 -28t68 28t28 68zM1696 1216 q0 40 -28 68t-68 28t-68 -28t-28 -68t28 -68t68 -28t68 28t28 68zM1792 384v-384h-1792v384h1792zM1792 896v-384h-1792v384h1792zM1792 1408v-384h-1792v384h1792z"/></svg>
<div class="c" style="left:53.50px;top:914.50px;"><span style="letter-spacing:-0.023px;">betelgeuse</span></div>
</nav>
<section class="panel abs" style="left:296px;top:74px;width:1112px;height:1345.7px">
<svg class="i blue" style="width:19.60px;height:19.6px;left:10.20px;top:16.20px" viewBox="0 -1536 1792 1792"><path transform="scale(1,-1)" d="M128 128h1024v128h-1024v-128zM128 640h1024v128h-1024v-128zM1696 192q0 40 -28 68t-68 28t-68 -28t-28 -68t28 -68t68 -28t68 28t28 68zM128 1152h1024v128h-1024v-128zM1696 704q0 40 -28 68t-68 28t-68 -28t-28 -68t28 -68t68 -28t68 28t28 68zM1696 1216 q0 40 -28 68t-68 28t-68 -28t-28 -68t28 -68t68 -28t68 28t28 68zM1792 384v-384h-1792v384h1792zM1792 896v-384h-1792v384h1792zM1792 1408v-384h-1792v384h1792z"/></svg>
<div class="c blue" style="left:39.30px;top:25.00px;font-size:19.6px"><span style="letter-spacing:-0.112px;">Remote 'algol'</span></div>
<div class="btn" style="left:981.00px;top:10.00px;width:121px;height:30px;background:#f1f1f1"></div>
<svg class="i" style="width:14.00px;height:14px;left:990.60px;top:18.20px" viewBox="0 -1536 1792 1792"><path transform="scale(1,-1)" d="M1408 608v-320q0 -119 -84.5 -203.5t-203.5 -84.5h-832q-119 0 -203.5 84.5t-84.5 203.5v832q0 119 84.5 203.5t203.5 84.5h704q14 0 23 -9t9 -23v-64q0 -14 -9 -23t-23 -9h-704q-66 0 -113 -47t-47 -113v-832q0 -66 47 -113t113 -47h832q66 0 113 47t47 113v320 q0 14 9 23t23 9h64q14 0 23 -9t9 -23zM1792 1472v-512q0 -26 -19 -45t-45 -19t-45 19l-176 176l-652 -652q-10 -10 -23 -10t-23 10l-114 114q-10 10 -10 23t10 23l652 652l-176 176q-19 19 -19 45t19 45t45 19h512q26 0 45 -19t19 -45z"/></svg>
<div class="c" style="left:1011.20px;top:25.00px"><span style="letter-spacing:-0.354px;">Open Web UI</span></div>
<div class="c" style="left:20.00px;top:77.00px"><span style="letter-spacing:0.020px;">Subscription Status</span></div>
<div class="r" style="left:1064.00px;top:77.00px"><span style="letter-spacing:0.047px;">Community</span></div>
<svg class="i" style="width:14.00px;height:14px;left:1076.00px;top:70.20px;color:#19a65a" viewBox="0 -1536 1792 1792"><path transform="scale(1,-1)" d="M1671 970q0 -40 -28 -68l-724 -724l-136 -136q-28 -28 -68 -28t-68 28l-136 136l-362 362q-28 28 -28 68t28 68l136 136q28 28 68 28t68 -28l294 -295l656 657q28 28 68 28t68 -28l136 -136q28 -28 28 -68z"/></svg>
<div class="c" style="left:20.00px;top:101.00px"><span style="letter-spacing:-0.041px;">Nodes</span></div>
<div class="r" style="left:1064.00px;top:101.00px"><span style="letter-spacing:0.109px;">2</span></div>
<svg class="i" style="width:12.00px;height:14px;left:1077.00px;top:94.20px;" viewBox="0 -1536 1536 1792"><path transform="scale(1,-1)" d="M1344 1536q26 0 45 -19t19 -45v-1664q0 -26 -19 -45t-45 -19h-1280q-26 0 -45 19t-19 45v1664q0 26 19 45t45 19h1280zM512 1248v-64q0 -14 9 -23t23 -9h64q14 0 23 9t9 23v64q0 14 -9 23t-23 9h-64q-14 0 -23 -9t-9 -23zM512 992v-64q0 -14 9 -23t23 -9h64q14 0 23 9 t9 23v64q0 14 -9 23t-23 9h-64q-14 0 -23 -9t-9 -23zM512 736v-64q0 -14 9 -23t23 -9h64q14 0 23 9t9 23v64q0 14 -9 23t-23 9h-64q-14 0 -23 -9t-9 -23zM512 480v-64q0 -14 9 -23t23 -9h64q14 0 23 9t9 23v64q0 14 -9 23t-23 9h-64q-14 0 -23 -9t-9 -23zM384 160v64 q0 14 -9 23t-23 9h-64q-14 0 -23 -9t-9 -23v-64q0 -14 9 -23t23 -9h64q14 0 23 9t9 23zM384 416v64q0 14 -9 23t-23 9h-64q-14 0 -23 -9t-9 -23v-64q0 -14 9 -23t23 -9h64q14 0 23 9t9 23zM384 672v64q0 14 -9 23t-23 9h-64q-14 0 -23 -9t-9 -23v-64q0 -14 9 -23t23 -9h64 q14 0 23 9t9 23zM384 928v64q0 14 -9 23t-23 9h-64q-14 0 -23 -9t-9 -23v-64q0 -14 9 -23t23 -9h64q14 0 23 9t9 23zM384 1184v64q0 14 -9 23t-23 9h-64q-14 0 -23 -9t-9 -23v-64q0 -14 9 -23t23 -9h64q14 0 23 9t9 23zM896 -96v192q0 14 -9 23t-23 9h-320q-14 0 -23 -9 t-9 -23v-192q0 -14 9 -23t23 -9h320q14 0 23 9t9 23zM896 416v64q0 14 -9 23t-23 9h-64q-14 0 -23 -9t-9 -23v-64q0 -14 9 -23t23 -9h64q14 0 23 9t9 23zM896 672v64q0 14 -9 23t-23 9h-64q-14 0 -23 -9t-9 -23v-64q0 -14 9 -23t23 -9h64q14 0 23 9t9 23zM896 928v64 q0 14 -9 23t-23 9h-64q-14 0 -23 -9t-9 -23v-64q0 -14 9 -23t23 -9h64q14 0 23 9t9 23zM896 1184v64q0 14 -9 23t-23 9h-64q-14 0 -23 -9t-9 -23v-64q0 -14 9 -23t23 -9h64q14 0 23 9t9 23zM1152 160v64q0 14 -9 23t-23 9h-64q-14 0 -23 -9t-9 -23v-64q0 -14 9 -23t23 -9h64 q14 0 23 9t9 23zM1152 416v64q0 14 -9 23t-23 9h-64q-14 0 -23 -9t-9 -23v-64q0 -14 9 -23t23 -9h64q14 0 23 9t9 23zM1152 672v64q0 14 -9 23t-23 9h-64q-14 0 -23 -9t-9 -23v-64q0 -14 9 -23t23 -9h64q14 0 23 9t9 23zM1152 928v64q0 14 -9 23t-23 9h-64q-14 0 -23 -9 t-9 -23v-64q0 -14 9 -23t23 -9h64q14 0 23 9t9 23zM1152 1184v64q0 14 -9 23t-23 9h-64q-14 0 -23 -9t-9 -23v-64q0 -14 9 -23t23 -9h64q14 0 23 9t9 23z"/></svg>
<div class="c" style="left:20.00px;top:125.00px"><span style="letter-spacing:-0.211px;">Guests</span></div>
<div class="r" style="left:1064.00px;top:125.00px"><span style="letter-spacing:0.006px;">6 / 8 (running / total)</span></div>
<svg class="i" style="width:15.00px;height:14px;left:1075.50px;top:118.00px;" viewBox="0 -1536 1920 1792"><path transform="scale(1,-1)" d="M1792 544v832q0 13 -9.5 22.5t-22.5 9.5h-1600q-13 0 -22.5 -9.5t-9.5 -22.5v-832q0 -13 9.5 -22.5t22.5 -9.5h1600q13 0 22.5 9.5t9.5 22.5zM1920 1376v-1088q0 -66 -47 -113t-113 -47h-544q0 -37 16 -77.5t32 -71t16 -43.5q0 -26 -19 -45t-45 -19h-512q-26 0 -45 19 t-19 45q0 14 16 44t32 70t16 78h-544q-66 0 -113 47t-47 113v1088q0 66 47 113t113 47h1600q66 0 113 -47t47 -113z"/></svg>
<div class="hr" style="top:152.00px"></div>
<svg class="i" style="width:18.29px;height:16px;left:20.00px;top:177.30px" viewBox="0 -1536 2048 1792"><path transform="scale(1,-1)" d="M640 640v-512h-256v512h256zM1024 1152v-1024h-256v1024h256zM2048 0v-128h-2048v1536h128v-1408h1920zM1408 896v-768h-256v768h256zM1792 1280v-1152h-256v1152h256z"/></svg>
<div class="c" style="left:47.60px;top:186.20px;font-size:16.8px"><span style="letter-spacing:-0.297px;">Usage</span></div>
<div class="c" style="left:20.00px;top:216.00px"><span style="letter-spacing:-0.219px;">Host CPU usage (avg.)</span></div>
<div class="r" style="left:1064.00px;top:216.00px"><span style="letter-spacing:0.122px;">1.65%</span></div>
<svg class="i" style="width:16.2px;height:16.1px;left:1074.90px;top:206.90px" viewBox="0 0 16.2 16.1"><rect x="3.05" y="0" width="1.9" height="16.1" rx=".45"/><rect x="0" y="3.05" width="16.2" height="1.9" rx=".45"/><rect x="6.1" y="0" width="1.0" height="16.1" rx=".45"/><rect x="0" y="6.1" width="16.2" height="1.0" rx=".45"/><rect x="9.1" y="0" width="1.0" height="16.1" rx=".45"/><rect x="0" y="9.1" width="16.2" height="1.0" rx=".45"/><rect x="11.2" y="0" width="1.95" height="16.1" rx=".45"/><rect x="0" y="11.2" width="16.2" height="1.95" rx=".45"/><rect x="2.2" y="2" width="11.8" height="12.1" rx="1"/><rect x="3.05" y="2.9" width="10.1" height="10.3" rx=".5" fill="#fff"/><rect x="4.2" y="4.1" width="7.8" height="7.9" rx=".3"/></svg>
<div class="bar" style="top:228.00px"><i style="width:17.7px"></i></div>
<div class="c" style="left:20.00px;top:250.70px"><span style="letter-spacing:-0.015px;">Host Memory used</span></div>
<div class="r" style="left:1064.00px;top:250.70px"><span style="letter-spacing:-0.100px;">5.04% (38.044 GiB of 754.56 GiB)</span></div>
<svg class="i" style="width:16.2px;height:9.2px;left:1074.90px;top:245.00px" viewBox="0 0 16.2 9.2"><rect x="0" y="0" width="16.2" height="8" rx=".5"/><rect x="1" y="1.9" width="14.2" height="5.2" fill="#fff"/><rect x="2.1" y="3" width="3" height="2.8" rx=".3"/><rect x="6.1" y="3" width="3.9" height="2.8" rx=".3"/><rect x="11.1" y="3" width="3.1" height="2.8" rx=".3"/><path d="M0.8 7.6h1.9l-.55 1.6h-.8z"/><path d="M3.7 7.6h1.9l-.55 1.6h-.8z"/><path d="M6.1 7.6h1.9l-.55 1.6h-.8z"/><path d="M8.5 7.6h1.9l-.55 1.6h-.8z"/><path d="M10.9 7.6h1.9l-.55 1.6h-.8z"/><path d="M13.6 7.6h1.9l-.55 1.6h-.8z"/></svg>
<div class="bar" style="top:263.00px"><i style="width:54px"></i></div>
<div class="c" style="left:20.00px;top:283.80px"><span style="letter-spacing:-0.097px;">Host Storage used</span></div>
<div class="r" style="left:1064.00px;top:283.80px"><span style="letter-spacing:-0.021px;">29.01% (5.305 TiB of 18.285 TiB)</span></div>
<svg class="i" style="width:12.00px;height:14px;left:1077.00px;top:277.20px;" viewBox="0 -1536 1536 1792"><path transform="scale(1,-1)" d="M768 768q237 0 443 43t325 127v-170q0 -69 -103 -128t-280 -93.5t-385 -34.5t-385 34.5t-280 93.5t-103 128v170q119 -84 325 -127t443 -43zM768 0q237 0 443 43t325 127v-170q0 -69 -103 -128t-280 -93.5t-385 -34.5t-385 34.5t-280 93.5t-103 128v170q119 -84 325 -127 t443 -43zM768 384q237 0 443 43t325 127v-170q0 -69 -103 -128t-280 -93.5t-385 -34.5t-385 34.5t-280 93.5t-103 128v170q119 -84 325 -127t443 -43zM768 1536q208 0 385 -34.5t280 -93.5t103 -128v-128q0 -69 -103 -128t-280 -93.5t-385 -34.5t-385 34.5t-280 93.5 t-103 128v128q0 69 103 128t280 93.5t385 34.5z"/></svg>
<div class="bar" style="top:296.00px"><i style="width:311px"></i></div>
<div class="hr" style="top:320.00px"></div>
<svg class="i" style="width:16.00px;height:16px;left:19.90px;top:345.00px" viewBox="0 -1536 1792 1792"><path transform="scale(1,-1)" d="M768 646l546 -546q-106 -108 -247.5 -168t-298.5 -60q-209 0 -385.5 103t-279.5 279.5t-103 385.5t103 385.5t279.5 279.5t385.5 103v-762zM955 640h773q0 -157 -60 -298.5t-168 -247.5zM1664 768h-768v768q209 0 385.5 -103t279.5 -279.5t103 -385.5z"/></svg>
<div class="c" style="left:45.40px;top:353.80px;font-size:16.8px"><span style="letter-spacing:0.150px;">Allocation</span></div>
<div class="c" style="left:20.00px;top:384.00px"><span style="letter-spacing:-0.269px;">CPU Cores assigned</span></div>
<div class="r" style="left:1064.00px;top:384.00px"><span style="letter-spacing:0.020px;">25 running / 128 physical (41 total configured)</span></div>
<svg class="i" style="width:16.2px;height:16.1px;left:1074.90px;top:374.60px" viewBox="0 0 16.2 16.1"><rect x="3.05" y="0" width="1.9" height="16.1" rx=".45"/><rect x="0" y="3.05" width="16.2" height="1.9" rx=".45"/><rect x="6.1" y="0" width="1.0" height="16.1" rx=".45"/><rect x="0" y="6.1" width="16.2" height="1.0" rx=".45"/><rect x="9.1" y="0" width="1.0" height="16.1" rx=".45"/><rect x="0" y="9.1" width="16.2" height="1.0" rx=".45"/><rect x="11.2" y="0" width="1.95" height="16.1" rx=".45"/><rect x="0" y="11.2" width="16.2" height="1.95" rx=".45"/><rect x="2.2" y="2" width="11.8" height="12.1" rx="1"/><rect x="3.05" y="2.9" width="10.1" height="10.3" rx=".5" fill="#fff"/><rect x="4.2" y="4.1" width="7.8" height="7.9" rx=".3"/></svg>
<div class="c" style="left:20.00px;top:409.90px"><span style="">Memory assigned</span></div>
<div class="r" style="left:1064.00px;top:409.90px"><span style="letter-spacing:-0.085px;">45 GiB running / 754.56 GiB physical (69 GiB total configured)</span></div>
<svg class="i" style="width:16.2px;height:9.2px;left:1074.90px;top:404.20px" viewBox="0 0 16.2 9.2"><rect x="0" y="0" width="16.2" height="8" rx=".5"/><rect x="1" y="1.9" width="14.2" height="5.2" fill="#fff"/><rect x="2.1" y="3" width="3" height="2.8" rx=".3"/><rect x="6.1" y="3" width="3.9" height="2.8" rx=".3"/><rect x="11.1" y="3" width="3.1" height="2.8" rx=".3"/><path d="M0.8 7.6h1.9l-.55 1.6h-.8z"/><path d="M3.7 7.6h1.9l-.55 1.6h-.8z"/><path d="M6.1 7.6h1.9l-.55 1.6h-.8z"/><path d="M8.5 7.6h1.9l-.55 1.6h-.8z"/><path d="M10.9 7.6h1.9l-.55 1.6h-.8z"/><path d="M13.6 7.6h1.9l-.55 1.6h-.8z"/></svg>
<div class="hr" style="top:437.00px"></div>
<svg class="i" style="width:16.00px;height:16px;left:30.00px;top:475.60px" viewBox="0 -1536 1792 1792"><path transform="scale(1,-1)" d="M128 128h1024v128h-1024v-128zM128 640h1024v128h-1024v-128zM1696 192q0 40 -28 68t-68 28t-68 -28t-28 -68t28 -68t68 -28t68 28t28 68zM128 1152h1024v128h-1024v-128zM1696 704q0 40 -28 68t-68 28t-68 -28t-28 -68t28 -68t68 -28t68 28t28 68zM1696 1216 q0 40 -28 68t-68 28t-68 -28t-28 -68t28 -68t68 -28t68 28t28 68zM1792 384v-384h-1792v384h1792zM1792 896v-384h-1792v384h1792zM1792 1408v-384h-1792v384h1792z"/></svg>
<div class="c" style="left:55.50px;top:483.80px;font-size:16.38px;-webkit-text-stroke:.35px #1e1e1e"><span style="letter-spacing:-0.089px;">Resources</span></div>
<div style="left:144.00px;top:468.00px;width:880px;height:31.6px;border:1px solid #b3bac5;border-radius:3px"></div>
<div class="c" style="left:155.00px;top:484.00px;font-size:14px;color:#8a8a8a"><span style="letter-spacing:0.016px;">Filter</span></div>
<div class="btn" style="left:1044.00px;top:469.00px;width:38px;height:30px;background:#f1f1f1"></div>
<svg class="i" style="width:12.00px;height:14px;left:1057.00px;top:477.00px" viewBox="0 -1536 1536 1792"><path transform="scale(1,-1)" d="M1511 480q0 -5 -1 -7q-64 -268 -268 -434.5t-478 -166.5q-146 0 -282.5 55t-243.5 157l-129 -129q-19 -19 -45 -19t-45 19t-19 45v448q0 26 19 45t45 19h448q26 0 45 -19t19 -45t-19 -45l-137 -137q71 -66 161 -102t187 -36q134 0 250 65t186 179q11 17 53 117 q8 23 30 23h192q13 0 22.5 -9.5t9.5 -22.5zM1536 1280v-448q0 -26 -19 -45t-45 -19h-448q-26 0 -45 19t-19 45t19 45l138 138q-148 137 -349 137q-134 0 -250 -65t-186 -179q-11 -17 -53 -117q-8 -23 -30 -23h-199q-13 0 -22.5 9.5t-9.5 22.5v7q65 268 270 434.5t480 166.5 q146 0 284 -55.5t245 -156.5l130 129q19 19 45 19t45 -19t19 -45z"/></svg>
<div class="hr" style="top:510.00px"></div>
<svg class="i" style="width:8.00px;height:14px;left:35.00px;top:524.40px" viewBox="0 -1536 1024 1792"><path transform="scale(1,-1)" d="M1024 832q0 -26 -19 -45l-448 -448q-19 -19 -45 -19t-45 19l-448 448q-19 19 -19 45t19 45t45 19h896q26 0 45 -19t19 -45z"/></svg>
<svg class="i" style="width:14.00px;height:14px;left:48.00px;top:523.60px" viewBox="0 -1536 1792 1792"><path transform="scale(1,-1)" d="M128 128h1024v128h-1024v-128zM128 640h1024v128h-1024v-128zM1696 192q0 40 -28 68t-68 28t-68 -28t-28 -68t28 -68t68 -28t68 28t28 68zM128 1152h1024v128h-1024v-128zM1696 704q0 40 -28 68t-68 28t-68 -28t-28 -68t28 -68t68 -28t68 28t28 68zM1696 1216 q0 40 -28 68t-68 28t-68 -28t-28 -68t28 -68t68 -28t68 28t28 68zM1792 384v-384h-1792v384h1792zM1792 896v-384h-1792v384h1792zM1792 1408v-384h-1792v384h1792z"/></svg>
<div class="c" style="left:71.50px;top:531.00px"><span style="letter-spacing:-0.036px;">Datacenter</span></div>
<svg class="i blue" style="width:14.00px;height:14px;left:1060.00px;top:524.30px" viewBox="0 -1536 1792 1792"><path transform="scale(1,-1)" d="M1408 608v-320q0 -119 -84.5 -203.5t-203.5 -84.5h-832q-119 0 -203.5 84.5t-84.5 203.5v832q0 119 84.5 203.5t203.5 84.5h704q14 0 23 -9t9 -23v-64q0 -14 -9 -23t-23 -9h-704q-66 0 -113 -47t-47 -113v-832q0 -66 47 -113t113 -47h832q66 0 113 47t47 113v320 q0 14 9 23t23 9h64q14 0 23 -9t9 -23zM1792 1472v-512q0 -26 -19 -45t-45 -19t-45 19l-176 176l-652 -652q-10 -10 -23 -10t-23 10l-114 114q-10 10 -10 23t10 23l652 652l-176 176q-19 19 -19 45t19 45t45 19h512q26 0 45 -19t19 -45z"/></svg>
<div style="left:20.00px;top:551.00px;width:1072px;height:40px;background:#e6ecf7"></div>
<svg class="i" style="width:8.00px;height:14px;left:55.00px;top:564.40px" viewBox="0 -1536 1024 1792"><path transform="scale(1,-1)" d="M1024 832q0 -26 -19 -45l-448 -448q-19 -19 -45 -19t-45 19l-448 448q-19 19 -19 45t19 45t45 19h896q26 0 45 -19t19 -45z"/></svg>
<svg class="i" style="width:12.00px;height:14px;left:70.50px;top:564.00px" viewBox="0 -1536 1536 1792"><path transform="scale(1,-1)" d="M1344 1536q26 0 45 -19t19 -45v-1664q0 -26 -19 -45t-45 -19h-1280q-26 0 -45 19t-19 45v1664q0 26 19 45t45 19h1280zM512 1248v-64q0 -14 9 -23t23 -9h64q14 0 23 9t9 23v64q0 14 -9 23t-23 9h-64q-14 0 -23 -9t-9 -23zM512 992v-64q0 -14 9 -23t23 -9h64q14 0 23 9 t9 23v64q0 14 -9 23t-23 9h-64q-14 0 -23 -9t-9 -23zM512 736v-64q0 -14 9 -23t23 -9h64q14 0 23 9t9 23v64q0 14 -9 23t-23 9h-64q-14 0 -23 -9t-9 -23zM512 480v-64q0 -14 9 -23t23 -9h64q14 0 23 9t9 23v64q0 14 -9 23t-23 9h-64q-14 0 -23 -9t-9 -23zM384 160v64 q0 14 -9 23t-23 9h-64q-14 0 -23 -9t-9 -23v-64q0 -14 9 -23t23 -9h64q14 0 23 9t9 23zM384 416v64q0 14 -9 23t-23 9h-64q-14 0 -23 -9t-9 -23v-64q0 -14 9 -23t23 -9h64q14 0 23 9t9 23zM384 672v64q0 14 -9 23t-23 9h-64q-14 0 -23 -9t-9 -23v-64q0 -14 9 -23t23 -9h64 q14 0 23 9t9 23zM384 928v64q0 14 -9 23t-23 9h-64q-14 0 -23 -9t-9 -23v-64q0 -14 9 -23t23 -9h64q14 0 23 9t9 23zM384 1184v64q0 14 -9 23t-23 9h-64q-14 0 -23 -9t-9 -23v-64q0 -14 9 -23t23 -9h64q14 0 23 9t9 23zM896 -96v192q0 14 -9 23t-23 9h-320q-14 0 -23 -9 t-9 -23v-192q0 -14 9 -23t23 -9h320q14 0 23 9t9 23zM896 416v64q0 14 -9 23t-23 9h-64q-14 0 -23 -9t-9 -23v-64q0 -14 9 -23t23 -9h64q14 0 23 9t9 23zM896 672v64q0 14 -9 23t-23 9h-64q-14 0 -23 -9t-9 -23v-64q0 -14 9 -23t23 -9h64q14 0 23 9t9 23zM896 928v64 q0 14 -9 23t-23 9h-64q-14 0 -23 -9t-9 -23v-64q0 -14 9 -23t23 -9h64q14 0 23 9t9 23zM896 1184v64q0 14 -9 23t-23 9h-64q-14 0 -23 -9t-9 -23v-64q0 -14 9 -23t23 -9h64q14 0 23 9t9 23zM1152 160v64q0 14 -9 23t-23 9h-64q-14 0 -23 -9t-9 -23v-64q0 -14 9 -23t23 -9h64 q14 0 23 9t9 23zM1152 416v64q0 14 -9 23t-23 9h-64q-14 0 -23 -9t-9 -23v-64q0 -14 9 -23t23 -9h64q14 0 23 9t9 23zM1152 672v64q0 14 -9 23t-23 9h-64q-14 0 -23 -9t-9 -23v-64q0 -14 9 -23t23 -9h64q14 0 23 9t9 23zM1152 928v64q0 14 -9 23t-23 9h-64q-14 0 -23 -9 t-9 -23v-64q0 -14 9 -23t23 -9h64q14 0 23 9t9 23zM1152 1184v64q0 14 -9 23t-23 9h-64q-14 0 -23 -9t-9 -23v-64q0 -14 9 -23t23 -9h64q14 0 23 9t9 23z"/></svg>
<svg class="i" style="left:82.10px;top:570.10px;width:10px;height:10px" viewBox="0 0 10 10"><circle cx="5" cy="5" r="4.9" fill="#19a65a"/><path d="M2.5 5.1l1.8 1.8 3.3-3.4" fill="none" stroke="#fff" stroke-width="1.5"/></svg>
<div class="c" style="left:95.80px;top:571.00px"><span style="letter-spacing:-0.023px;">betelgeuse</span></div>
<svg class="i blue" style="width:14.00px;height:14px;left:1060.00px;top:564.30px" viewBox="0 -1536 1792 1792"><path transform="scale(1,-1)" d="M1408 608v-320q0 -119 -84.5 -203.5t-203.5 -84.5h-832q-119 0 -203.5 84.5t-84.5 203.5v832q0 119 84.5 203.5t203.5 84.5h704q14 0 23 -9t9 -23v-64q0 -14 -9 -23t-23 -9h-704q-66 0 -113 -47t-47 -113v-832q0 -66 47 -113t113 -47h832q66 0 113 47t47 113v320 q0 14 9 23t23 9h64q14 0 23 -9t9 -23zM1792 1472v-512q0 -26 -19 -45t-45 -19t-45 19l-176 176l-652 -652q-10 -10 -23 -10t-23 10l-114 114q-10 10 -10 23t10 23l652 652l-176 176q-19 19 -19 45t19 45t45 19h512q26 0 45 -19t19 -45z"/></svg>
<svg class="i" style="width:14.00px;height:14px;left:90.20px;top:604.40px" viewBox="0 -1536 1792 1792"><path transform="scale(1,-1)" d="M896 -93l640 349v636l-640 -233v-752zM832 772l698 254l-698 254l-698 -254zM1664 1024v-768q0 -35 -18 -65t-49 -47l-704 -384q-28 -16 -61 -16t-61 16l-704 384q-31 17 -49 47t-18 65v768q0 40 23 73t61 47l704 256q22 8 44 8t44 -8l704 -256q38 -14 61 -47t23 -73z"/></svg>
<svg class="i" style="left:100.00px;top:609.80px;width:9.2px;height:9.2px" viewBox="0 0 9.2 9.2"><path d="M0 0l9.2 4.6L0 9.2z" fill="#19a65a"/></svg>
<div class="c" style="left:115.80px;top:611.00px"><span style="letter-spacing:0.012px;">370 (regulus)</span></div>
<svg class="i blue" style="width:14.00px;height:14px;left:1060.00px;top:604.30px" viewBox="0 -1536 1792 1792"><path transform="scale(1,-1)" d="M1408 608v-320q0 -119 -84.5 -203.5t-203.5 -84.5h-832q-119 0 -203.5 84.5t-84.5 203.5v832q0 119 84.5 203.5t203.5 84.5h704q14 0 23 -9t9 -23v-64q0 -14 -9 -23t-23 -9h-704q-66 0 -113 -47t-47 -113v-832q0 -66 47 -113t113 -47h832q66 0 113 47t47 113v320 q0 14 9 23t23 9h64q14 0 23 -9t9 -23zM1792 1472v-512q0 -26 -19 -45t-45 -19t-45 19l-176 176l-652 -652q-10 -10 -23 -10t-23 10l-114 114q-10 10 -10 23t10 23l652 652l-176 176q-19 19 -19 45t19 45t45 19h512q26 0 45 -19t19 -45z"/></svg>
<svg class="i blue" style="width:14.00px;height:14px;left:1030.00px;top:603.90px" viewBox="0 -1536 1792 1792"><path transform="scale(1,-1)" d="M1764 1525q33 -24 27 -64l-256 -1536q-5 -29 -32 -45q-14 -8 -31 -8q-11 0 -24 5l-527 215l-298 -327q-18 -21 -47 -21q-14 0 -23 4q-19 7 -30 23.5t-11 36.5v452l-472 193q-37 14 -40 55q-3 39 32 59l1664 960q35 21 68 -2zM1422 26l221 1323l-1434 -827l336 -137 l863 639l-478 -797z"/></svg>
<svg class="i" style="width:11.00px;height:14px;left:1001.00px;top:603.90px;color:#8c8c8c" viewBox="0 -1536 1408 1792"><path transform="scale(1,-1)" d="M1384 609l-1328 -738q-23 -13 -39.5 -3t-16.5 36v1472q0 26 16.5 36t39.5 -3l1328 -738q23 -13 23 -31t-23 -31z"/></svg>
<svg class="i" style="width:12.00px;height:14px;left:971.00px;top:603.70px;color:#be0019" viewBox="0 -1536 1536 1792"><path transform="scale(1,-1)" d="M1536 640q0 -156 -61 -298t-164 -245t-245 -164t-298 -61t-298 61t-245 164t-164 245t-61 298q0 182 80.5 343t226.5 270q43 32 95.5 25t83.5 -50q32 -42 24.5 -94.5t-49.5 -84.5q-98 -74 -151.5 -181t-53.5 -228q0 -104 40.5 -198.5t109.5 -163.5t163.5 -109.5 t198.5 -40.5t198.5 40.5t163.5 109.5t109.5 163.5t40.5 198.5q0 121 -53.5 228t-151.5 181q-42 32 -49.5 84.5t24.5 94.5q31 43 84 50t95 -25q146 -109 226.5 -270t80.5 -343zM896 1408v-640q0 -52 -38 -90t-90 -38t-90 38t-38 90v640q0 52 38 90t90 38t90 -38t38 -90z"/></svg>
<svg class="i" style="width:15.00px;height:14px;left:89.70px;top:644.20px;color:#cdcdcd" viewBox="0 -1536 1920 1792"><path transform="scale(1,-1)" d="M1792 544v832q0 13 -9.5 22.5t-22.5 9.5h-1600q-13 0 -22.5 -9.5t-9.5 -22.5v-832q0 -13 9.5 -22.5t22.5 -9.5h1600q13 0 22.5 9.5t9.5 22.5zM1920 1376v-1088q0 -66 -47 -113t-113 -47h-544q0 -37 16 -77.5t32 -71t16 -43.5q0 -26 -19 -45t-45 -19h-512q-26 0 -45 19 t-19 45q0 14 16 44t32 70t16 78h-544q-66 0 -113 47t-47 113v1088q0 66 47 113t113 47h1600q66 0 113 -47t47 -113z"/></svg>
<div class="c" style="left:115.80px;top:651.00px"><span style="letter-spacing:0.078px;">100 (algol)</span></div>
<svg class="i blue" style="width:14.00px;height:14px;left:1060.00px;top:644.30px" viewBox="0 -1536 1792 1792"><path transform="scale(1,-1)" d="M1408 608v-320q0 -119 -84.5 -203.5t-203.5 -84.5h-832q-119 0 -203.5 84.5t-84.5 203.5v832q0 119 84.5 203.5t203.5 84.5h704q14 0 23 -9t9 -23v-64q0 -14 -9 -23t-23 -9h-704q-66 0 -113 -47t-47 -113v-832q0 -66 47 -113t113 -47h832q66 0 113 47t47 113v320 q0 14 9 23t23 9h64q14 0 23 -9t9 -23zM1792 1472v-512q0 -26 -19 -45t-45 -19t-45 19l-176 176l-652 -652q-10 -10 -23 -10t-23 10l-114 114q-10 10 -10 23t10 23l652 652l-176 176q-19 19 -19 45t19 45t45 19h512q26 0 45 -19t19 -45z"/></svg>
<svg class="i blue" style="width:14.00px;height:14px;left:1030.00px;top:643.90px" viewBox="0 -1536 1792 1792"><path transform="scale(1,-1)" d="M1764 1525q33 -24 27 -64l-256 -1536q-5 -29 -32 -45q-14 -8 -31 -8q-11 0 -24 5l-527 215l-298 -327q-18 -21 -47 -21q-14 0 -23 4q-19 7 -30 23.5t-11 36.5v452l-472 193q-37 14 -40 55q-3 39 32 59l1664 960q35 21 68 -2zM1422 26l221 1323l-1434 -827l336 -137 l863 639l-478 -797z"/></svg>
<svg class="i" style="width:11.00px;height:14px;left:1001.00px;top:643.90px;color:#19a65a" viewBox="0 -1536 1408 1792"><path transform="scale(1,-1)" d="M1384 609l-1328 -738q-23 -13 -39.5 -3t-16.5 36v1472q0 26 16.5 36t39.5 -3l1328 -738q23 -13 23 -31t-23 -31z"/></svg>
<svg class="i" style="width:12.00px;height:14px;left:971.00px;top:643.70px;color:#8c8c8c" viewBox="0 -1536 1536 1792"><path transform="scale(1,-1)" d="M1536 640q0 -156 -61 -298t-164 -245t-245 -164t-298 -61t-298 61t-245 164t-164 245t-61 298q0 182 80.5 343t226.5 270q43 32 95.5 25t83.5 -50q32 -42 24.5 -94.5t-49.5 -84.5q-98 -74 -151.5 -181t-53.5 -228q0 -104 40.5 -198.5t109.5 -163.5t163.5 -109.5 t198.5 -40.5t198.5 40.5t163.5 109.5t109.5 163.5t40.5 198.5q0 121 -53.5 228t-151.5 181q-42 32 -49.5 84.5t24.5 94.5q31 43 84 50t95 -25q146 -109 226.5 -270t80.5 -343zM896 1408v-640q0 -52 -38 -90t-90 -38t-90 38t-38 90v640q0 52 38 90t90 38t90 -38t38 -90z"/></svg>
<svg class="i" style="width:12.00px;height:14px;left:90.70px;top:683.60px" viewBox="0 -1536 1536 1792"><path transform="scale(1,-1)" d="M768 768q237 0 443 43t325 127v-170q0 -69 -103 -128t-280 -93.5t-385 -34.5t-385 34.5t-280 93.5t-103 128v170q119 -84 325 -127t443 -43zM768 0q237 0 443 43t325 127v-170q0 -69 -103 -128t-280 -93.5t-385 -34.5t-385 34.5t-280 93.5t-103 128v170q119 -84 325 -127 t443 -43zM768 384q237 0 443 43t325 127v-170q0 -69 -103 -128t-280 -93.5t-385 -34.5t-385 34.5t-280 93.5t-103 128v170q119 -84 325 -127t443 -43zM768 1536q208 0 385 -34.5t280 -93.5t103 -128v-128q0 -69 -103 -128t-280 -93.5t-385 -34.5t-385 34.5t-280 93.5 t-103 128v128q0 69 103 128t280 93.5t385 34.5z"/></svg>
<svg class="i" style="left:102.10px;top:690.10px;width:10px;height:10px" viewBox="0 0 10 10"><circle cx="5" cy="5" r="4.9" fill="#19a65a"/><path d="M2.5 5.1l1.8 1.8 3.3-3.4" fill="none" stroke="#fff" stroke-width="1.5"/></svg>
<div class="c" style="left:115.80px;top:691.00px"><span style="letter-spacing:-0.059px;">merak</span></div>
<svg class="i blue" style="width:14.00px;height:14px;left:1060.00px;top:684.30px" viewBox="0 -1536 1792 1792"><path transform="scale(1,-1)" d="M1408 608v-320q0 -119 -84.5 -203.5t-203.5 -84.5h-832q-119 0 -203.5 84.5t-84.5 203.5v832q0 119 84.5 203.5t203.5 84.5h704q14 0 23 -9t9 -23v-64q0 -14 -9 -23t-23 -9h-704q-66 0 -113 -47t-47 -113v-832q0 -66 47 -113t113 -47h832q66 0 113 47t47 113v320 q0 14 9 23t23 9h64q14 0 23 -9t9 -23zM1792 1472v-512q0 -26 -19 -45t-45 -19t-45 19l-176 176l-652 -652q-10 -10 -23 -10t-23 10l-114 114q-10 10 -10 23t10 23l652 652l-176 176q-19 19 -19 45t19 45t45 19h512q26 0 45 -19t19 -45z"/></svg>
<svg class="i" style="width:12.00px;height:14px;left:90.70px;top:723.60px" viewBox="0 -1536 1536 1792"><path transform="scale(1,-1)" d="M768 768q237 0 443 43t325 127v-170q0 -69 -103 -128t-280 -93.5t-385 -34.5t-385 34.5t-280 93.5t-103 128v170q119 -84 325 -127t443 -43zM768 0q237 0 443 43t325 127v-170q0 -69 -103 -128t-280 -93.5t-385 -34.5t-385 34.5t-280 93.5t-103 128v170q119 -84 325 -127 t443 -43zM768 384q237 0 443 43t325 127v-170q0 -69 -103 -128t-280 -93.5t-385 -34.5t-385 34.5t-280 93.5t-103 128v170q119 -84 325 -127t443 -43zM768 1536q208 0 385 -34.5t280 -93.5t103 -128v-128q0 -69 -103 -128t-280 -93.5t-385 -34.5t-385 34.5t-280 93.5 t-103 128v128q0 69 103 128t280 93.5t385 34.5z"/></svg>
<svg class="i" style="left:102.10px;top:730.10px;width:10px;height:10px" viewBox="0 0 10 10"><circle cx="5" cy="5" r="4.9" fill="#19a65a"/><path d="M2.5 5.1l1.8 1.8 3.3-3.4" fill="none" stroke="#fff" stroke-width="1.5"/></svg>
<div class="c" style="left:115.80px;top:731.00px"><span style="letter-spacing:0.062px;">maia</span></div>
<svg class="i blue" style="width:14.00px;height:14px;left:1060.00px;top:724.30px" viewBox="0 -1536 1792 1792"><path transform="scale(1,-1)" d="M1408 608v-320q0 -119 -84.5 -203.5t-203.5 -84.5h-832q-119 0 -203.5 84.5t-84.5 203.5v832q0 119 84.5 203.5t203.5 84.5h704q14 0 23 -9t9 -23v-64q0 -14 -9 -23t-23 -9h-704q-66 0 -113 -47t-47 -113v-832q0 -66 47 -113t113 -47h832q66 0 113 47t47 113v320 q0 14 9 23t23 9h64q14 0 23 -9t9 -23zM1792 1472v-512q0 -26 -19 -45t-45 -19t-45 19l-176 176l-652 -652q-10 -10 -23 -10t-23 10l-114 114q-10 10 -10 23t10 23l652 652l-176 176q-19 19 -19 45t19 45t45 19h512q26 0 45 -19t19 -45z"/></svg>
<svg class="i" style="width:12.00px;height:14px;left:90.70px;top:763.60px" viewBox="0 -1536 1536 1792"><path transform="scale(1,-1)" d="M768 768q237 0 443 43t325 127v-170q0 -69 -103 -128t-280 -93.5t-385 -34.5t-385 34.5t-280 93.5t-103 128v170q119 -84 325 -127t443 -43zM768 0q237 0 443 43t325 127v-170q0 -69 -103 -128t-280 -93.5t-385 -34.5t-385 34.5t-280 93.5t-103 128v170q119 -84 325 -127 t443 -43zM768 384q237 0 443 43t325 127v-170q0 -69 -103 -128t-280 -93.5t-385 -34.5t-385 34.5t-280 93.5t-103 128v170q119 -84 325 -127t443 -43zM768 1536q208 0 385 -34.5t280 -93.5t103 -128v-128q0 -69 -103 -128t-280 -93.5t-385 -34.5t-385 34.5t-280 93.5 t-103 128v128q0 69 103 128t280 93.5t385 34.5z"/></svg>
<svg class="i" style="left:102.10px;top:770.10px;width:10px;height:10px" viewBox="0 0 10 10"><circle cx="5" cy="5" r="4.9" fill="#19a65a"/><path d="M2.5 5.1l1.8 1.8 3.3-3.4" fill="none" stroke="#fff" stroke-width="1.5"/></svg>
<div class="c" style="left:115.80px;top:771.00px"><span style="letter-spacing:0.076px;">kochab</span></div>
<svg class="i blue" style="width:14.00px;height:14px;left:1060.00px;top:764.30px" viewBox="0 -1536 1792 1792"><path transform="scale(1,-1)" d="M1408 608v-320q0 -119 -84.5 -203.5t-203.5 -84.5h-832q-119 0 -203.5 84.5t-84.5 203.5v832q0 119 84.5 203.5t203.5 84.5h704q14 0 23 -9t9 -23v-64q0 -14 -9 -23t-23 -9h-704q-66 0 -113 -47t-47 -113v-832q0 -66 47 -113t113 -47h832q66 0 113 47t47 113v320 q0 14 9 23t23 9h64q14 0 23 -9t9 -23zM1792 1472v-512q0 -26 -19 -45t-45 -19t-45 19l-176 176l-652 -652q-10 -10 -23 -10t-23 10l-114 114q-10 10 -10 23t10 23l652 652l-176 176q-19 19 -19 45t19 45t45 19h512q26 0 45 -19t19 -45z"/></svg>
<svg class="i" style="width:8.00px;height:14px;left:55.00px;top:804.40px" viewBox="0 -1536 1024 1792"><path transform="scale(1,-1)" d="M1024 832q0 -26 -19 -45l-448 -448q-19 -19 -45 -19t-45 19l-448 448q-19 19 -19 45t19 45t45 19h896q26 0 45 -19t19 -45z"/></svg>
<svg class="i" style="width:12.00px;height:14px;left:70.50px;top:804.00px" viewBox="0 -1536 1536 1792"><path transform="scale(1,-1)" d="M1344 1536q26 0 45 -19t19 -45v-1664q0 -26 -19 -45t-45 -19h-1280q-26 0 -45 19t-19 45v1664q0 26 19 45t45 19h1280zM512 1248v-64q0 -14 9 -23t23 -9h64q14 0 23 9t9 23v64q0 14 -9 23t-23 9h-64q-14 0 -23 -9t-9 -23zM512 992v-64q0 -14 9 -23t23 -9h64q14 0 23 9 t9 23v64q0 14 -9 23t-23 9h-64q-14 0 -23 -9t-9 -23zM512 736v-64q0 -14 9 -23t23 -9h64q14 0 23 9t9 23v64q0 14 -9 23t-23 9h-64q-14 0 -23 -9t-9 -23zM512 480v-64q0 -14 9 -23t23 -9h64q14 0 23 9t9 23v64q0 14 -9 23t-23 9h-64q-14 0 -23 -9t-9 -23zM384 160v64 q0 14 -9 23t-23 9h-64q-14 0 -23 -9t-9 -23v-64q0 -14 9 -23t23 -9h64q14 0 23 9t9 23zM384 416v64q0 14 -9 23t-23 9h-64q-14 0 -23 -9t-9 -23v-64q0 -14 9 -23t23 -9h64q14 0 23 9t9 23zM384 672v64q0 14 -9 23t-23 9h-64q-14 0 -23 -9t-9 -23v-64q0 -14 9 -23t23 -9h64 q14 0 23 9t9 23zM384 928v64q0 14 -9 23t-23 9h-64q-14 0 -23 -9t-9 -23v-64q0 -14 9 -23t23 -9h64q14 0 23 9t9 23zM384 1184v64q0 14 -9 23t-23 9h-64q-14 0 -23 -9t-9 -23v-64q0 -14 9 -23t23 -9h64q14 0 23 9t9 23zM896 -96v192q0 14 -9 23t-23 9h-320q-14 0 -23 -9 t-9 -23v-192q0 -14 9 -23t23 -9h320q14 0 23 9t9 23zM896 416v64q0 14 -9 23t-23 9h-64q-14 0 -23 -9t-9 -23v-64q0 -14 9 -23t23 -9h64q14 0 23 9t9 23zM896 672v64q0 14 -9 23t-23 9h-64q-14 0 -23 -9t-9 -23v-64q0 -14 9 -23t23 -9h64q14 0 23 9t9 23zM896 928v64 q0 14 -9 23t-23 9h-64q-14 0 -23 -9t-9 -23v-64q0 -14 9 -23t23 -9h64q14 0 23 9t9 23zM896 1184v64q0 14 -9 23t-23 9h-64q-14 0 -23 -9t-9 -23v-64q0 -14 9 -23t23 -9h64q14 0 23 9t9 23zM1152 160v64q0 14 -9 23t-23 9h-64q-14 0 -23 -9t-9 -23v-64q0 -14 9 -23t23 -9h64 q14 0 23 9t9 23zM1152 416v64q0 14 -9 23t-23 9h-64q-14 0 -23 -9t-9 -23v-64q0 -14 9 -23t23 -9h64q14 0 23 9t9 23zM1152 672v64q0 14 -9 23t-23 9h-64q-14 0 -23 -9t-9 -23v-64q0 -14 9 -23t23 -9h64q14 0 23 9t9 23zM1152 928v64q0 14 -9 23t-23 9h-64q-14 0 -23 -9 t-9 -23v-64q0 -14 9 -23t23 -9h64q14 0 23 9t9 23zM1152 1184v64q0 14 -9 23t-23 9h-64q-14 0 -23 -9t-9 -23v-64q0 -14 9 -23t23 -9h64q14 0 23 9t9 23z"/></svg>
<svg class="i" style="left:82.10px;top:810.10px;width:10px;height:10px" viewBox="0 0 10 10"><circle cx="5" cy="5" r="4.9" fill="#19a65a"/><path d="M2.5 5.1l1.8 1.8 3.3-3.4" fill="none" stroke="#fff" stroke-width="1.5"/></svg>
<div class="c" style="left:95.80px;top:811.00px"><span style="letter-spacing:0.020px;">procyon</span></div>
<svg class="i blue" style="width:14.00px;height:14px;left:1060.00px;top:804.30px" viewBox="0 -1536 1792 1792"><path transform="scale(1,-1)" d="M1408 608v-320q0 -119 -84.5 -203.5t-203.5 -84.5h-832q-119 0 -203.5 84.5t-84.5 203.5v832q0 119 84.5 203.5t203.5 84.5h704q14 0 23 -9t9 -23v-64q0 -14 -9 -23t-23 -9h-704q-66 0 -113 -47t-47 -113v-832q0 -66 47 -113t113 -47h832q66 0 113 47t47 113v320 q0 14 9 23t23 9h64q14 0 23 -9t9 -23zM1792 1472v-512q0 -26 -19 -45t-45 -19t-45 19l-176 176l-652 -652q-10 -10 -23 -10t-23 10l-114 114q-10 10 -10 23t10 23l652 652l-176 176q-19 19 -19 45t19 45t45 19h512q26 0 45 -19t19 -45z"/></svg>
<svg class="i" style="width:14.00px;height:14px;left:90.20px;top:844.40px" viewBox="0 -1536 1792 1792"><path transform="scale(1,-1)" d="M896 -93l640 349v636l-640 -233v-752zM832 772l698 254l-698 254l-698 -254zM1664 1024v-768q0 -35 -18 -65t-49 -47l-704 -384q-28 -16 -61 -16t-61 16l-704 384q-31 17 -49 47t-18 65v768q0 40 23 73t61 47l704 256q22 8 44 8t44 -8l704 -256q38 -14 61 -47t23 -73z"/></svg>
<svg class="i" style="left:100.00px;top:849.80px;width:9.2px;height:9.2px" viewBox="0 0 9.2 9.2"><path d="M0 0l9.2 4.6L0 9.2z" fill="#19a65a"/></svg>
<div class="c" style="left:115.80px;top:851.00px"><span style="letter-spacing:0.028px;">437 (saiph)</span></div>
<svg class="i blue" style="width:14.00px;height:14px;left:1060.00px;top:844.30px" viewBox="0 -1536 1792 1792"><path transform="scale(1,-1)" d="M1408 608v-320q0 -119 -84.5 -203.5t-203.5 -84.5h-832q-119 0 -203.5 84.5t-84.5 203.5v832q0 119 84.5 203.5t203.5 84.5h704q14 0 23 -9t9 -23v-64q0 -14 -9 -23t-23 -9h-704q-66 0 -113 -47t-47 -113v-832q0 -66 47 -113t113 -47h832q66 0 113 47t47 113v320 q0 14 9 23t23 9h64q14 0 23 -9t9 -23zM1792 1472v-512q0 -26 -19 -45t-45 -19t-45 19l-176 176l-652 -652q-10 -10 -23 -10t-23 10l-114 114q-10 10 -10 23t10 23l652 652l-176 176q-19 19 -19 45t19 45t45 19h512q26 0 45 -19t19 -45z"/></svg>
<svg class="i blue" style="width:14.00px;height:14px;left:1030.00px;top:843.90px" viewBox="0 -1536 1792 1792"><path transform="scale(1,-1)" d="M1764 1525q33 -24 27 -64l-256 -1536q-5 -29 -32 -45q-14 -8 -31 -8q-11 0 -24 5l-527 215l-298 -327q-18 -21 -47 -21q-14 0 -23 4q-19 7 -30 23.5t-11 36.5v452l-472 193q-37 14 -40 55q-3 39 32 59l1664 960q35 21 68 -2zM1422 26l221 1323l-1434 -827l336 -137 l863 639l-478 -797z"/></svg>
<svg class="i" style="width:11.00px;height:14px;left:1001.00px;top:843.90px;color:#8c8c8c" viewBox="0 -1536 1408 1792"><path transform="scale(1,-1)" d="M1384 609l-1328 -738q-23 -13 -39.5 -3t-16.5 36v1472q0 26 16.5 36t39.5 -3l1328 -738q23 -13 23 -31t-23 -31z"/></svg>
<svg class="i" style="width:12.00px;height:14px;left:971.00px;top:843.70px;color:#be0019" viewBox="0 -1536 1536 1792"><path transform="scale(1,-1)" d="M1536 640q0 -156 -61 -298t-164 -245t-245 -164t-298 -61t-298 61t-245 164t-164 245t-61 298q0 182 80.5 343t226.5 270q43 32 95.5 25t83.5 -50q32 -42 24.5 -94.5t-49.5 -84.5q-98 -74 -151.5 -181t-53.5 -228q0 -104 40.5 -198.5t109.5 -163.5t163.5 -109.5 t198.5 -40.5t198.5 40.5t163.5 109.5t109.5 163.5t40.5 198.5q0 121 -53.5 228t-151.5 181q-42 32 -49.5 84.5t24.5 94.5q31 43 84 50t95 -25q146 -109 226.5 -270t80.5 -343zM896 1408v-640q0 -52 -38 -90t-90 -38t-90 38t-38 90v640q0 52 38 90t90 38t90 -38t38 -90z"/></svg>
<svg class="i" style="width:14.00px;height:14px;left:90.20px;top:884.40px" viewBox="0 -1536 1792 1792"><path transform="scale(1,-1)" d="M896 -93l640 349v636l-640 -233v-752zM832 772l698 254l-698 254l-698 -254zM1664 1024v-768q0 -35 -18 -65t-49 -47l-704 -384q-28 -16 -61 -16t-61 16l-704 384q-31 17 -49 47t-18 65v768q0 40 23 73t61 47l704 256q22 8 44 8t44 -8l704 -256q38 -14 61 -47t23 -73z"/></svg>
<svg class="i" style="left:100.00px;top:889.80px;width:9.2px;height:9.2px" viewBox="0 0 9.2 9.2"><path d="M0 0l9.2 4.6L0 9.2z" fill="#19a65a"/></svg>
<div class="c" style="left:115.80px;top:891.00px"><span style="letter-spacing:0.138px;">471 (enif)</span></div>
<svg class="i blue" style="width:14.00px;height:14px;left:1060.00px;top:884.30px" viewBox="0 -1536 1792 1792"><path transform="scale(1,-1)" d="M1408 608v-320q0 -119 -84.5 -203.5t-203.5 -84.5h-832q-119 0 -203.5 84.5t-84.5 203.5v832q0 119 84.5 203.5t203.5 84.5h704q14 0 23 -9t9 -23v-64q0 -14 -9 -23t-23 -9h-704q-66 0 -113 -47t-47 -113v-832q0 -66 47 -113t113 -47h832q66 0 113 47t47 113v320 q0 14 9 23t23 9h64q14 0 23 -9t9 -23zM1792 1472v-512q0 -26 -19 -45t-45 -19t-45 19l-176 176l-652 -652q-10 -10 -23 -10t-23 10l-114 114q-10 10 -10 23t10 23l652 652l-176 176q-19 19 -19 45t19 45t45 19h512q26 0 45 -19t19 -45z"/></svg>
<svg class="i blue" style="width:14.00px;height:14px;left:1030.00px;top:883.90px" viewBox="0 -1536 1792 1792"><path transform="scale(1,-1)" d="M1764 1525q33 -24 27 -64l-256 -1536q-5 -29 -32 -45q-14 -8 -31 -8q-11 0 -24 5l-527 215l-298 -327q-18 -21 -47 -21q-14 0 -23 4q-19 7 -30 23.5t-11 36.5v452l-472 193q-37 14 -40 55q-3 39 32 59l1664 960q35 21 68 -2zM1422 26l221 1323l-1434 -827l336 -137 l863 639l-478 -797z"/></svg>
<svg class="i" style="width:11.00px;height:14px;left:1001.00px;top:883.90px;color:#8c8c8c" viewBox="0 -1536 1408 1792"><path transform="scale(1,-1)" d="M1384 609l-1328 -738q-23 -13 -39.5 -3t-16.5 36v1472q0 26 16.5 36t39.5 -3l1328 -738q23 -13 23 -31t-23 -31z"/></svg>
<svg class="i" style="width:12.00px;height:14px;left:971.00px;top:883.70px;color:#be0019" viewBox="0 -1536 1536 1792"><path transform="scale(1,-1)" d="M1536 640q0 -156 -61 -298t-164 -245t-245 -164t-298 -61t-298 61t-245 164t-164 245t-61 298q0 182 80.5 343t226.5 270q43 32 95.5 25t83.5 -50q32 -42 24.5 -94.5t-49.5 -84.5q-98 -74 -151.5 -181t-53.5 -228q0 -104 40.5 -198.5t109.5 -163.5t163.5 -109.5 t198.5 -40.5t198.5 40.5t163.5 109.5t109.5 163.5t40.5 198.5q0 121 -53.5 228t-151.5 181q-42 32 -49.5 84.5t24.5 94.5q31 43 84 50t95 -25q146 -109 226.5 -270t80.5 -343zM896 1408v-640q0 -52 -38 -90t-90 -38t-90 38t-38 90v640q0 52 38 90t90 38t90 -38t38 -90z"/></svg>
<svg class="i" style="width:15.00px;height:14px;left:89.50px;top:924.10px" viewBox="0 -1536 1920 1792"><path transform="scale(1,-1)" d="M1792 544v832q0 13 -9.5 22.5t-22.5 9.5h-1600q-13 0 -22.5 -9.5t-9.5 -22.5v-832q0 -13 9.5 -22.5t22.5 -9.5h1600q13 0 22.5 9.5t9.5 22.5zM1920 1376v-1088q0 -66 -47 -113t-113 -47h-544q0 -37 16 -77.5t32 -71t16 -43.5q0 -26 -19 -45t-45 -19h-512q-26 0 -45 19 t-19 45q0 14 16 44t32 70t16 78h-544q-66 0 -113 47t-47 113v1088q0 66 47 113t113 47h1600q66 0 113 -47t47 -113z"/></svg>
<svg class="i" style="left:100.00px;top:929.80px;width:9.2px;height:9.2px" viewBox="0 0 9.2 9.2"><path d="M0 0l9.2 4.6L0 9.2z" fill="#19a65a"/></svg>
<div class="c" style="left:115.80px;top:931.00px"><span style="letter-spacing:0.064px;">435 (pollux)</span></div>
<svg class="i blue" style="width:14.00px;height:14px;left:1060.00px;top:924.30px" viewBox="0 -1536 1792 1792"><path transform="scale(1,-1)" d="M1408 608v-320q0 -119 -84.5 -203.5t-203.5 -84.5h-832q-119 0 -203.5 84.5t-84.5 203.5v832q0 119 84.5 203.5t203.5 84.5h704q14 0 23 -9t9 -23v-64q0 -14 -9 -23t-23 -9h-704q-66 0 -113 -47t-47 -113v-832q0 -66 47 -113t113 -47h832q66 0 113 47t47 113v320 q0 14 9 23t23 9h64q14 0 23 -9t9 -23zM1792 1472v-512q0 -26 -19 -45t-45 -19t-45 19l-176 176l-652 -652q-10 -10 -23 -10t-23 10l-114 114q-10 10 -10 23t10 23l652 652l-176 176q-19 19 -19 45t19 45t45 19h512q26 0 45 -19t19 -45z"/></svg>
<svg class="i blue" style="width:14.00px;height:14px;left:1030.00px;top:923.90px" viewBox="0 -1536 1792 1792"><path transform="scale(1,-1)" d="M1764 1525q33 -24 27 -64l-256 -1536q-5 -29 -32 -45q-14 -8 -31 -8q-11 0 -24 5l-527 215l-298 -327q-18 -21 -47 -21q-14 0 -23 4q-19 7 -30 23.5t-11 36.5v452l-472 193q-37 14 -40 55q-3 39 32 59l1664 960q35 21 68 -2zM1422 26l221 1323l-1434 -827l336 -137 l863 639l-478 -797z"/></svg>
<svg class="i" style="width:11.00px;height:14px;left:1001.00px;top:923.90px;color:#8c8c8c" viewBox="0 -1536 1408 1792"><path transform="scale(1,-1)" d="M1384 609l-1328 -738q-23 -13 -39.5 -3t-16.5 36v1472q0 26 16.5 36t39.5 -3l1328 -738q23 -13 23 -31t-23 -31z"/></svg>
<svg class="i" style="width:12.00px;height:14px;left:971.00px;top:923.70px;color:#be0019" viewBox="0 -1536 1536 1792"><path transform="scale(1,-1)" d="M1536 640q0 -156 -61 -298t-164 -245t-245 -164t-298 -61t-298 61t-245 164t-164 245t-61 298q0 182 80.5 343t226.5 270q43 32 95.5 25t83.5 -50q32 -42 24.5 -94.5t-49.5 -84.5q-98 -74 -151.5 -181t-53.5 -228q0 -104 40.5 -198.5t109.5 -163.5t163.5 -109.5 t198.5 -40.5t198.5 40.5t163.5 109.5t109.5 163.5t40.5 198.5q0 121 -53.5 228t-151.5 181q-42 32 -49.5 84.5t24.5 94.5q31 43 84 50t95 -25q146 -109 226.5 -270t80.5 -343zM896 1408v-640q0 -52 -38 -90t-90 -38t-90 38t-38 90v640q0 52 38 90t90 38t90 -38t38 -90z"/></svg>
<svg class="i" style="width:15.00px;height:14px;left:89.50px;top:964.10px" viewBox="0 -1536 1920 1792"><path transform="scale(1,-1)" d="M1792 544v832q0 13 -9.5 22.5t-22.5 9.5h-1600q-13 0 -22.5 -9.5t-9.5 -22.5v-832q0 -13 9.5 -22.5t22.5 -9.5h1600q13 0 22.5 9.5t9.5 22.5zM1920 1376v-1088q0 -66 -47 -113t-113 -47h-544q0 -37 16 -77.5t32 -71t16 -43.5q0 -26 -19 -45t-45 -19h-512q-26 0 -45 19 t-19 45q0 14 16 44t32 70t16 78h-544q-66 0 -113 47t-47 113v1088q0 66 47 113t113 47h1600q66 0 113 -47t47 -113z"/></svg>
<svg class="i" style="left:100.00px;top:969.80px;width:9.2px;height:9.2px" viewBox="0 0 9.2 9.2"><path d="M0 0l9.2 4.6L0 9.2z" fill="#19a65a"/></svg>
<div class="c" style="left:115.80px;top:971.00px"><span style="letter-spacing:-0.006px;">436 (betelgeuse)</span></div>
<svg class="i blue" style="width:14.00px;height:14px;left:1060.00px;top:964.30px" viewBox="0 -1536 1792 1792"><path transform="scale(1,-1)" d="M1408 608v-320q0 -119 -84.5 -203.5t-203.5 -84.5h-832q-119 0 -203.5 84.5t-84.5 203.5v832q0 119 84.5 203.5t203.5 84.5h704q14 0 23 -9t9 -23v-64q0 -14 -9 -23t-23 -9h-704q-66 0 -113 -47t-47 -113v-832q0 -66 47 -113t113 -47h832q66 0 113 47t47 113v320 q0 14 9 23t23 9h64q14 0 23 -9t9 -23zM1792 1472v-512q0 -26 -19 -45t-45 -19t-45 19l-176 176l-652 -652q-10 -10 -23 -10t-23 10l-114 114q-10 10 -10 23t10 23l652 652l-176 176q-19 19 -19 45t19 45t45 19h512q26 0 45 -19t19 -45z"/></svg>
<svg class="i blue" style="width:14.00px;height:14px;left:1030.00px;top:963.90px" viewBox="0 -1536 1792 1792"><path transform="scale(1,-1)" d="M1764 1525q33 -24 27 -64l-256 -1536q-5 -29 -32 -45q-14 -8 -31 -8q-11 0 -24 5l-527 215l-298 -327q-18 -21 -47 -21q-14 0 -23 4q-19 7 -30 23.5t-11 36.5v452l-472 193q-37 14 -40 55q-3 39 32 59l1664 960q35 21 68 -2zM1422 26l221 1323l-1434 -827l336 -137 l863 639l-478 -797z"/></svg>
<svg class="i" style="width:11.00px;height:14px;left:1001.00px;top:963.90px;color:#8c8c8c" viewBox="0 -1536 1408 1792"><path transform="scale(1,-1)" d="M1384 609l-1328 -738q-23 -13 -39.5 -3t-16.5 36v1472q0 26 16.5 36t39.5 -3l1328 -738q23 -13 23 -31t-23 -31z"/></svg>
<svg class="i" style="width:12.00px;height:14px;left:971.00px;top:963.70px;color:#be0019" viewBox="0 -1536 1536 1792"><path transform="scale(1,-1)" d="M1536 640q0 -156 -61 -298t-164 -245t-245 -164t-298 -61t-298 61t-245 164t-164 245t-61 298q0 182 80.5 343t226.5 270q43 32 95.5 25t83.5 -50q32 -42 24.5 -94.5t-49.5 -84.5q-98 -74 -151.5 -181t-53.5 -228q0 -104 40.5 -198.5t109.5 -163.5t163.5 -109.5 t198.5 -40.5t198.5 40.5t163.5 109.5t109.5 163.5t40.5 198.5q0 121 -53.5 228t-151.5 181q-42 32 -49.5 84.5t24.5 94.5q31 43 84 50t95 -25q146 -109 226.5 -270t80.5 -343zM896 1408v-640q0 -52 -38 -90t-90 -38t-90 38t-38 90v640q0 52 38 90t90 38t90 -38t38 -90z"/></svg>
<svg class="i" style="width:15.00px;height:14px;left:89.70px;top:1004.20px;color:#cdcdcd" viewBox="0 -1536 1920 1792"><path transform="scale(1,-1)" d="M1792 544v832q0 13 -9.5 22.5t-22.5 9.5h-1600q-13 0 -22.5 -9.5t-9.5 -22.5v-832q0 -13 9.5 -22.5t22.5 -9.5h1600q13 0 22.5 9.5t9.5 22.5zM1920 1376v-1088q0 -66 -47 -113t-113 -47h-544q0 -37 16 -77.5t32 -71t16 -43.5q0 -26 -19 -45t-45 -19h-512q-26 0 -45 19 t-19 45q0 14 16 44t32 70t16 78h-544q-66 0 -113 47t-47 113v1088q0 66 47 113t113 47h1600q66 0 113 -47t47 -113z"/></svg>
<div class="c" style="left:115.80px;top:1011.00px"><span style="letter-spacing:-0.006px;">439 (betelgeuse)</span></div>
<svg class="i blue" style="width:14.00px;height:14px;left:1060.00px;top:1004.30px" viewBox="0 -1536 1792 1792"><path transform="scale(1,-1)" d="M1408 608v-320q0 -119 -84.5 -203.5t-203.5 -84.5h-832q-119 0 -203.5 84.5t-84.5 203.5v832q0 119 84.5 203.5t203.5 84.5h704q14 0 23 -9t9 -23v-64q0 -14 -9 -23t-23 -9h-704q-66 0 -113 -47t-47 -113v-832q0 -66 47 -113t113 -47h832q66 0 113 47t47 113v320 q0 14 9 23t23 9h64q14 0 23 -9t9 -23zM1792 1472v-512q0 -26 -19 -45t-45 -19t-45 19l-176 176l-652 -652q-10 -10 -23 -10t-23 10l-114 114q-10 10 -10 23t10 23l652 652l-176 176q-19 19 -19 45t19 45t45 19h512q26 0 45 -19t19 -45z"/></svg>
<svg class="i blue" style="width:14.00px;height:14px;left:1030.00px;top:1003.90px" viewBox="0 -1536 1792 1792"><path transform="scale(1,-1)" d="M1764 1525q33 -24 27 -64l-256 -1536q-5 -29 -32 -45q-14 -8 -31 -8q-11 0 -24 5l-527 215l-298 -327q-18 -21 -47 -21q-14 0 -23 4q-19 7 -30 23.5t-11 36.5v452l-472 193q-37 14 -40 55q-3 39 32 59l1664 960q35 21 68 -2zM1422 26l221 1323l-1434 -827l336 -137 l863 639l-478 -797z"/></svg>
<svg class="i" style="width:11.00px;height:14px;left:1001.00px;top:1003.90px;color:#19a65a" viewBox="0 -1536 1408 1792"><path transform="scale(1,-1)" d="M1384 609l-1328 -738q-23 -13 -39.5 -3t-16.5 36v1472q0 26 16.5 36t39.5 -3l1328 -738q23 -13 23 -31t-23 -31z"/></svg>
<svg class="i" style="width:12.00px;height:14px;left:971.00px;top:1003.70px;color:#8c8c8c" viewBox="0 -1536 1536 1792"><path transform="scale(1,-1)" d="M1536 640q0 -156 -61 -298t-164 -245t-245 -164t-298 -61t-298 61t-245 164t-164 245t-61 298q0 182 80.5 343t226.5 270q43 32 95.5 25t83.5 -50q32 -42 24.5 -94.5t-49.5 -84.5q-98 -74 -151.5 -181t-53.5 -228q0 -104 40.5 -198.5t109.5 -163.5t163.5 -109.5 t198.5 -40.5t198.5 40.5t163.5 109.5t109.5 163.5t40.5 198.5q0 121 -53.5 228t-151.5 181q-42 32 -49.5 84.5t24.5 94.5q31 43 84 50t95 -25q146 -109 226.5 -270t80.5 -343zM896 1408v-640q0 -52 -38 -90t-90 -38t-90 38t-38 90v640q0 52 38 90t90 38t90 -38t38 -90z"/></svg>
<svg class="i" style="width:15.00px;height:14px;left:89.50px;top:1044.10px" viewBox="0 -1536 1920 1792"><path transform="scale(1,-1)" d="M1792 544v832q0 13 -9.5 22.5t-22.5 9.5h-1600q-13 0 -22.5 -9.5t-9.5 -22.5v-832q0 -13 9.5 -22.5t22.5 -9.5h1600q13 0 22.5 9.5t9.5 22.5zM1920 1376v-1088q0 -66 -47 -113t-113 -47h-544q0 -37 16 -77.5t32 -71t16 -43.5q0 -26 -19 -45t-45 -19h-512q-26 0 -45 19 t-19 45q0 14 16 44t32 70t16 78h-544q-66 0 -113 47t-47 113v1088q0 66 47 113t113 47h1600q66 0 113 -47t47 -113z"/></svg>
<svg class="i" style="left:100.00px;top:1049.80px;width:9.2px;height:9.2px" viewBox="0 0 9.2 9.2"><path d="M0 0l9.2 4.6L0 9.2z" fill="#19a65a"/></svg>
<div class="c" style="left:115.80px;top:1051.00px"><span style="letter-spacing:0.043px;">442 (alkaid)</span></div>
<svg class="i blue" style="width:14.00px;height:14px;left:1060.00px;top:1044.30px" viewBox="0 -1536 1792 1792"><path transform="scale(1,-1)" d="M1408 608v-320q0 -119 -84.5 -203.5t-203.5 -84.5h-832q-119 0 -203.5 84.5t-84.5 203.5v832q0 119 84.5 203.5t203.5 84.5h704q14 0 23 -9t9 -23v-64q0 -14 -9 -23t-23 -9h-704q-66 0 -113 -47t-47 -113v-832q0 -66 47 -113t113 -47h832q66 0 113 47t47 113v320 q0 14 9 23t23 9h64q14 0 23 -9t9 -23zM1792 1472v-512q0 -26 -19 -45t-45 -19t-45 19l-176 176l-652 -652q-10 -10 -23 -10t-23 10l-114 114q-10 10 -10 23t10 23l652 652l-176 176q-19 19 -19 45t19 45t45 19h512q26 0 45 -19t19 -45z"/></svg>
<svg class="i blue" style="width:14.00px;height:14px;left:1030.00px;top:1043.90px" viewBox="0 -1536 1792 1792"><path transform="scale(1,-1)" d="M1764 1525q33 -24 27 -64l-256 -1536q-5 -29 -32 -45q-14 -8 -31 -8q-11 0 -24 5l-527 215l-298 -327q-18 -21 -47 -21q-14 0 -23 4q-19 7 -30 23.5t-11 36.5v452l-472 193q-37 14 -40 55q-3 39 32 59l1664 960q35 21 68 -2zM1422 26l221 1323l-1434 -827l336 -137 l863 639l-478 -797z"/></svg>
<svg class="i" style="width:11.00px;height:14px;left:1001.00px;top:1043.90px;color:#8c8c8c" viewBox="0 -1536 1408 1792"><path transform="scale(1,-1)" d="M1384 609l-1328 -738q-23 -13 -39.5 -3t-16.5 36v1472q0 26 16.5 36t39.5 -3l1328 -738q23 -13 23 -31t-23 -31z"/></svg>
<svg class="i" style="width:12.00px;height:14px;left:971.00px;top:1043.70px;color:#be0019" viewBox="0 -1536 1536 1792"><path transform="scale(1,-1)" d="M1536 640q0 -156 -61 -298t-164 -245t-245 -164t-298 -61t-298 61t-245 164t-164 245t-61 298q0 182 80.5 343t226.5 270q43 32 95.5 25t83.5 -50q32 -42 24.5 -94.5t-49.5 -84.5q-98 -74 -151.5 -181t-53.5 -228q0 -104 40.5 -198.5t109.5 -163.5t163.5 -109.5 t198.5 -40.5t198.5 40.5t163.5 109.5t109.5 163.5t40.5 198.5q0 121 -53.5 228t-151.5 181q-42 32 -49.5 84.5t24.5 94.5q31 43 84 50t95 -25q146 -109 226.5 -270t80.5 -343zM896 1408v-640q0 -52 -38 -90t-90 -38t-90 38t-38 90v640q0 52 38 90t90 38t90 -38t38 -90z"/></svg>
<svg class="i" style="width:12.00px;height:14px;left:90.70px;top:1083.60px" viewBox="0 -1536 1536 1792"><path transform="scale(1,-1)" d="M768 768q237 0 443 43t325 127v-170q0 -69 -103 -128t-280 -93.5t-385 -34.5t-385 34.5t-280 93.5t-103 128v170q119 -84 325 -127t443 -43zM768 0q237 0 443 43t325 127v-170q0 -69 -103 -128t-280 -93.5t-385 -34.5t-385 34.5t-280 93.5t-103 128v170q119 -84 325 -127 t443 -43zM768 384q237 0 443 43t325 127v-170q0 -69 -103 -128t-280 -93.5t-385 -34.5t-385 34.5t-280 93.5t-103 128v170q119 -84 325 -127t443 -43zM768 1536q208 0 385 -34.5t280 -93.5t103 -128v-128q0 -69 -103 -128t-280 -93.5t-385 -34.5t-385 34.5t-280 93.5 t-103 128v128q0 69 103 128t280 93.5t385 34.5z"/></svg>
<svg class="i" style="left:102.10px;top:1090.10px;width:10px;height:10px" viewBox="0 0 10 10"><circle cx="5" cy="5" r="4.9" fill="#19a65a"/><path d="M2.5 5.1l1.8 1.8 3.3-3.4" fill="none" stroke="#fff" stroke-width="1.5"/></svg>
<div class="c" style="left:115.80px;top:1091.00px"><span style="letter-spacing:-0.059px;">merak</span></div>
<svg class="i blue" style="width:14.00px;height:14px;left:1060.00px;top:1084.30px" viewBox="0 -1536 1792 1792"><path transform="scale(1,-1)" d="M1408 608v-320q0 -119 -84.5 -203.5t-203.5 -84.5h-832q-119 0 -203.5 84.5t-84.5 203.5v832q0 119 84.5 203.5t203.5 84.5h704q14 0 23 -9t9 -23v-64q0 -14 -9 -23t-23 -9h-704q-66 0 -113 -47t-47 -113v-832q0 -66 47 -113t113 -47h832q66 0 113 47t47 113v320 q0 14 9 23t23 9h64q14 0 23 -9t9 -23zM1792 1472v-512q0 -26 -19 -45t-45 -19t-45 19l-176 176l-652 -652q-10 -10 -23 -10t-23 10l-114 114q-10 10 -10 23t10 23l652 652l-176 176q-19 19 -19 45t19 45t45 19h512q26 0 45 -19t19 -45z"/></svg>
<svg class="i" style="width:12.00px;height:14px;left:90.70px;top:1123.60px" viewBox="0 -1536 1536 1792"><path transform="scale(1,-1)" d="M768 768q237 0 443 43t325 127v-170q0 -69 -103 -128t-280 -93.5t-385 -34.5t-385 34.5t-280 93.5t-103 128v170q119 -84 325 -127t443 -43zM768 0q237 0 443 43t325 127v-170q0 -69 -103 -128t-280 -93.5t-385 -34.5t-385 34.5t-280 93.5t-103 128v170q119 -84 325 -127 t443 -43zM768 384q237 0 443 43t325 127v-170q0 -69 -103 -128t-280 -93.5t-385 -34.5t-385 34.5t-280 93.5t-103 128v170q119 -84 325 -127t443 -43zM768 1536q208 0 385 -34.5t280 -93.5t103 -128v-128q0 -69 -103 -128t-280 -93.5t-385 -34.5t-385 34.5t-280 93.5 t-103 128v128q0 69 103 128t280 93.5t385 34.5z"/></svg>
<svg class="i" style="left:102.10px;top:1130.10px;width:10px;height:10px" viewBox="0 0 10 10"><circle cx="5" cy="5" r="4.9" fill="#19a65a"/><path d="M2.5 5.1l1.8 1.8 3.3-3.4" fill="none" stroke="#fff" stroke-width="1.5"/></svg>
<div class="c" style="left:115.80px;top:1131.00px"><span style="letter-spacing:0.062px;">maia</span></div>
<svg class="i blue" style="width:14.00px;height:14px;left:1060.00px;top:1124.30px" viewBox="0 -1536 1792 1792"><path transform="scale(1,-1)" d="M1408 608v-320q0 -119 -84.5 -203.5t-203.5 -84.5h-832q-119 0 -203.5 84.5t-84.5 203.5v832q0 119 84.5 203.5t203.5 84.5h704q14 0 23 -9t9 -23v-64q0 -14 -9 -23t-23 -9h-704q-66 0 -113 -47t-47 -113v-832q0 -66 47 -113t113 -47h832q66 0 113 47t47 113v320 q0 14 9 23t23 9h64q14 0 23 -9t9 -23zM1792 1472v-512q0 -26 -19 -45t-45 -19t-45 19l-176 176l-652 -652q-10 -10 -23 -10t-23 10l-114 114q-10 10 -10 23t10 23l652 652l-176 176q-19 19 -19 45t19 45t45 19h512q26 0 45 -19t19 -45z"/></svg>
<svg class="i" style="width:12.00px;height:14px;left:90.70px;top:1163.60px" viewBox="0 -1536 1536 1792"><path transform="scale(1,-1)" d="M768 768q237 0 443 43t325 127v-170q0 -69 -103 -128t-280 -93.5t-385 -34.5t-385 34.5t-280 93.5t-103 128v170q119 -84 325 -127t443 -43zM768 0q237 0 443 43t325 127v-170q0 -69 -103 -128t-280 -93.5t-385 -34.5t-385 34.5t-280 93.5t-103 128v170q119 -84 325 -127 t443 -43zM768 384q237 0 443 43t325 127v-170q0 -69 -103 -128t-280 -93.5t-385 -34.5t-385 34.5t-280 93.5t-103 128v170q119 -84 325 -127t443 -43zM768 1536q208 0 385 -34.5t280 -93.5t103 -128v-128q0 -69 -103 -128t-280 -93.5t-385 -34.5t-385 34.5t-280 93.5 t-103 128v128q0 69 103 128t280 93.5t385 34.5z"/></svg>
<svg class="i" style="left:102.10px;top:1170.10px;width:10px;height:10px" viewBox="0 0 10 10"><circle cx="5" cy="5" r="4.9" fill="#19a65a"/><path d="M2.5 5.1l1.8 1.8 3.3-3.4" fill="none" stroke="#fff" stroke-width="1.5"/></svg>
<div class="c" style="left:115.80px;top:1171.00px"><span style="letter-spacing:0.076px;">kochab</span></div>
<svg class="i blue" style="width:14.00px;height:14px;left:1060.00px;top:1164.30px" viewBox="0 -1536 1792 1792"><path transform="scale(1,-1)" d="M1408 608v-320q0 -119 -84.5 -203.5t-203.5 -84.5h-832q-119 0 -203.5 84.5t-84.5 203.5v832q0 119 84.5 203.5t203.5 84.5h704q14 0 23 -9t9 -23v-64q0 -14 -9 -23t-23 -9h-704q-66 0 -113 -47t-47 -113v-832q0 -66 47 -113t113 -47h832q66 0 113 47t47 113v320 q0 14 9 23t23 9h64q14 0 23 -9t9 -23zM1792 1472v-512q0 -26 -19 -45t-45 -19t-45 19l-176 176l-652 -652q-10 -10 -23 -10t-23 10l-114 114q-10 10 -10 23t10 23l652 652l-176 176q-19 19 -19 45t19 45t45 19h512q26 0 45 -19t19 -45z"/></svg>
</section>
<section class="panel abs" style="left:1428px;top:74px;width:1112px;height:1345.7px">
<svg class="i blue" style="width:16.80px;height:19.6px;left:9.80px;top:12.00px" viewBox="0 -1536 1536 1792"><path transform="scale(1,-1)" d="M1344 1536q26 0 45 -19t19 -45v-1664q0 -26 -19 -45t-45 -19h-1280q-26 0 -45 19t-19 45v1664q0 26 19 45t45 19h1280zM512 1248v-64q0 -14 9 -23t23 -9h64q14 0 23 9t9 23v64q0 14 -9 23t-23 9h-64q-14 0 -23 -9t-9 -23zM512 992v-64q0 -14 9 -23t23 -9h64q14 0 23 9 t9 23v64q0 14 -9 23t-23 9h-64q-14 0 -23 -9t-9 -23zM512 736v-64q0 -14 9 -23t23 -9h64q14 0 23 9t9 23v64q0 14 -9 23t-23 9h-64q-14 0 -23 -9t-9 -23zM512 480v-64q0 -14 9 -23t23 -9h64q14 0 23 9t9 23v64q0 14 -9 23t-23 9h-64q-14 0 -23 -9t-9 -23zM384 160v64 q0 14 -9 23t-23 9h-64q-14 0 -23 -9t-9 -23v-64q0 -14 9 -23t23 -9h64q14 0 23 9t9 23zM384 416v64q0 14 -9 23t-23 9h-64q-14 0 -23 -9t-9 -23v-64q0 -14 9 -23t23 -9h64q14 0 23 9t9 23zM384 672v64q0 14 -9 23t-23 9h-64q-14 0 -23 -9t-9 -23v-64q0 -14 9 -23t23 -9h64 q14 0 23 9t9 23zM384 928v64q0 14 -9 23t-23 9h-64q-14 0 -23 -9t-9 -23v-64q0 -14 9 -23t23 -9h64q14 0 23 9t9 23zM384 1184v64q0 14 -9 23t-23 9h-64q-14 0 -23 -9t-9 -23v-64q0 -14 9 -23t23 -9h64q14 0 23 9t9 23zM896 -96v192q0 14 -9 23t-23 9h-320q-14 0 -23 -9 t-9 -23v-192q0 -14 9 -23t23 -9h320q14 0 23 9t9 23zM896 416v64q0 14 -9 23t-23 9h-64q-14 0 -23 -9t-9 -23v-64q0 -14 9 -23t23 -9h64q14 0 23 9t9 23zM896 672v64q0 14 -9 23t-23 9h-64q-14 0 -23 -9t-9 -23v-64q0 -14 9 -23t23 -9h64q14 0 23 9t9 23zM896 928v64 q0 14 -9 23t-23 9h-64q-14 0 -23 -9t-9 -23v-64q0 -14 9 -23t23 -9h64q14 0 23 9t9 23zM896 1184v64q0 14 -9 23t-23 9h-64q-14 0 -23 -9t-9 -23v-64q0 -14 9 -23t23 -9h64q14 0 23 9t9 23zM1152 160v64q0 14 -9 23t-23 9h-64q-14 0 -23 -9t-9 -23v-64q0 -14 9 -23t23 -9h64 q14 0 23 9t9 23zM1152 416v64q0 14 -9 23t-23 9h-64q-14 0 -23 -9t-9 -23v-64q0 -14 9 -23t23 -9h64q14 0 23 9t9 23zM1152 672v64q0 14 -9 23t-23 9h-64q-14 0 -23 -9t-9 -23v-64q0 -14 9 -23t23 -9h64q14 0 23 9t9 23zM1152 928v64q0 14 -9 23t-23 9h-64q-14 0 -23 -9 t-9 -23v-64q0 -14 9 -23t23 -9h64q14 0 23 9t9 23zM1152 1184v64q0 14 -9 23t-23 9h-64q-14 0 -23 -9t-9 -23v-64q0 -14 9 -23t23 -9h64q14 0 23 9t9 23z"/></svg>
<div class="c blue" style="left:37.10px;top:21.80px;font-size:19.6px"><span style="letter-spacing:-0.063px;">Node 'betelgeuse'</span></div>
<svg class="i" style="width:14.00px;height:14px;left:20.00px;top:58.80px;" viewBox="0 -1536 1792 1792"><path transform="scale(1,-1)" d="M384 384q0 53 -37.5 90.5t-90.5 37.5t-90.5 -37.5t-37.5 -90.5t37.5 -90.5t90.5 -37.5t90.5 37.5t37.5 90.5zM576 832q0 53 -37.5 90.5t-90.5 37.5t-90.5 -37.5t-37.5 -90.5t37.5 -90.5t90.5 -37.5t90.5 37.5t37.5 90.5zM1004 351l101 382q6 26 -7.5 48.5t-38.5 29.5 t-48 -6.5t-30 -39.5l-101 -382q-60 -5 -107 -43.5t-63 -98.5q-20 -77 20 -146t117 -89t146 20t89 117q16 60 -6 117t-72 91zM1664 384q0 53 -37.5 90.5t-90.5 37.5t-90.5 -37.5t-37.5 -90.5t37.5 -90.5t90.5 -37.5t90.5 37.5t37.5 90.5zM1024 1024q0 53 -37.5 90.5 t-90.5 37.5t-90.5 -37.5t-37.5 -90.5t37.5 -90.5t90.5 -37.5t90.5 37.5t37.5 90.5zM1472 832q0 53 -37.5 90.5t-90.5 37.5t-90.5 -37.5t-37.5 -90.5t37.5 -90.5t90.5 -37.5t90.5 37.5t37.5 90.5zM1792 384q0 -261 -141 -483q-19 -29 -54 -29h-1402q-35 0 -54 29 q-141 221 -141 483q0 182 71 348t191 286t286 191t348 71t348 -71t286 -191t191 -286t71 -348z"/></svg>
<div class="c" style="left:40.40px;top:65.90px;"><span style="letter-spacing:-0.227px;">Overview</span></div>
<svg class="i" style="width:12.00px;height:14px;left:137.20px;top:58.80px;" viewBox="0 -1536 1536 1792"><path transform="scale(1,-1)" d="M1400 256h-248v-248q29 10 41 22l185 185q12 12 22 41zM1120 384h288v896h-1280v-1280h896v288q0 40 28 68t68 28zM1536 1312v-1024q0 -40 -20 -88t-48 -76l-184 -184q-28 -28 -76 -48t-88 -20h-1024q-40 0 -68 28t-28 68v1344q0 40 28 68t68 28h1344q40 0 68 -28t28 -68 z"/></svg>
<div class="c" style="left:155.60px;top:65.90px;"><span style="letter-spacing:0.028px;">Notes</span></div>
<svg class="i" style="width:12.00px;height:14px;left:232.60px;top:58.80px;" viewBox="0 -1536 1536 1792"><path transform="scale(1,-1)" d="M1511 480q0 -5 -1 -7q-64 -268 -268 -434.5t-478 -166.5q-146 0 -282.5 55t-243.5 157l-129 -129q-19 -19 -45 -19t-45 19t-19 45v448q0 26 19 45t45 19h448q26 0 45 -19t19 -45t-19 -45l-137 -137q71 -66 161 -102t187 -36q134 0 250 65t186 179q11 17 53 117 q8 23 30 23h192q13 0 22.5 -9.5t9.5 -22.5zM1536 1280v-448q0 -26 -19 -45t-45 -19h-448q-26 0 -45 19t-19 45t19 45l138 138q-148 137 -349 137q-134 0 -250 -65t-186 -179q-11 -17 -53 -117q-8 -23 -30 -23h-199q-13 0 -22.5 9.5t-9.5 22.5v7q65 268 270 434.5t480 166.5 q146 0 284 -55.5t245 -156.5l130 129q19 19 45 19t45 -19t19 -45z"/></svg>
<div class="c" style="left:251.20px;top:65.90px;"><span style="letter-spacing:-0.069px;">Updates</span></div>
<svg class="i" style="width:13.00px;height:14px;left:343.00px;top:58.80px;color:#1b5eab;" viewBox="0 -1536 1664 1792"><path transform="scale(1,-1)" d="M585 553l-466 -466q-10 -10 -23 -10t-23 10l-50 50q-10 10 -10 23t10 23l393 393l-393 393q-10 10 -10 23t10 23l50 50q10 10 23 10t23 -10l466 -466q10 -10 10 -23t-10 -23zM1664 96v-64q0 -14 -9 -23t-23 -9h-960q-14 0 -23 9t-9 23v64q0 14 9 23t23 9h960q14 0 23 -9 t9 -23z"/></svg>
<div class="c" style="left:362.80px;top:65.90px;color:#1b5eab;"><span style="letter-spacing:-0.153px;">Shell</span></div>
<div style="left:342.80px;top:85.40px;width:50.4px;height:3.6px;background:#1b5eab;border-radius:3px 3px 0 0"></div>
<div id="term"><div class="tt"><div><span>top - 14:25:22 up 6 days,  3:20,  1 user,  load average: 0.62, 0.47, 0.42</span></div><div><span>Tasks: <b>1306</b> total, <b>  1</b> running, <b>1305</b> sleeping, <b>  0</b> stopped, <b>  0</b> zombie</span></div><div><span>%Cpu(s):<b>  0.1</b> us,<b>  0.2</b> sy,<b>  0.0</b> ni,<b> 99.6</b> id,<b>  0.0</b> wa,<b>  0.0</b> hi,<b>  0.0</b> si,<b>  0.0</b> st</span></div><div><span>MiB Mem : <b>386334.9</b> total, <b>378159.8</b> free, <b> 10048.2</b> used, <b>  1063.0</b> buff/cache</span></div><div><span>MiB Swap: <b>     0.0</b> total, <b>     0.0</b> free, <b>     0.0</b> used. <b>376286.7</b> avail Mem</span></div><div><span></span></div><div class="h"><span>    PID USER      PR  NI    VIRT    RES    SHR S  %CPU  %MEM     TIME+ COMMAND</span></div><div><span>3933923 100033    20   0  118220  12064   6732 S   9.9   0.0 120:09.85 nginx</span></div><div><span>3933918 100033    20   0  118304  12236   6736 S   5.3   0.0 118:07.74 nginx</span></div><div><span>3933920 100033    20   0  117888  11860   6740 S   2.0   0.0 119:33.84 nginx</span></div><div><span>3933922 100033    20   0  118016  11956   6744 S   2.0   0.0 116:41.17 nginx</span></div><div><span>   3212 root      rt   0  572172 179692  51604 S   0.7   0.0  64:06.92 corosync</span></div><div><span> 745412 www-data  20   0  268640 200212  14308 S   0.7   0.1   0:03.52 pveproxy worker</span></div><div><span><b> 760433 root      20   0   11852   6664   3656 R   0.7   0.0   0:00.11 top</b></span></div><div><span>     96 root      20   0       0      0      0 S   0.3   0.0   1:17.44 ksoftirqd/13</span></div><div><span>   2041 root       0 -20       0      0      0 S   0.3   0.0   4:32.65 z_rd_int_2</span></div><div><span>   2042 root       0 -20       0      0      0 S   0.3   0.0   4:33.25 z_rd_int_3</span></div><div><span>   2201 root      20   0       0      0      0 S   0.3   0.0   7:26.07 txg_sync</span></div><div><span> 519472 root      20   0       0      0      0 I   0.3   0.0   0:00.19 kworker/u263:0-kvfree_rcu_reclaim</span></div><div><span> 746340 www-data  20   0  237780 168060  10984 S   0.3   0.0   0:03.17 pveproxy worker</span></div><div><span> 756412 www-data  20   0  229400 157708   8684 S   0.3   0.0   0:00.94 pveproxy worker</span></div><div><span> 758720 root       1 -19       0      0      0 S   0.3   0.0   0:00.01 z_wr_iss_0</span></div><div><span>2222359 root      20   0  203956 122120   5532 S   0.3   0.0   0:15.81 pve-ha-lrm</span></div><div><span>      1 root      20   0   25340  12792   7552 S   0.0   0.0   3:21.19 systemd</span></div><div><span>      2 root      20   0       0      0      0 S   0.0   0.0   0:55.39 kthreadd</span></div><div><span>      3 root      20   0       0      0      0 S   0.0   0.0   0:00.00 pool_workqueue_release</span></div><div><span>      4 root       0 -20       0      0      0 I   0.0   0.0   0:00.00 kworker/R-rcu_gp</span></div><div><span>      5 root       0 -20       0      0      0 I   0.0   0.0   0:00.00 kworker/R-sync_wq</span></div><div><span>      6 root       0 -20       0      0      0 I   0.0   0.0   0:00.00 kworker/R-kvfree_rcu_reclaim</span></div><div><span>      7 root       0 -20       0      0      0 I   0.0   0.0   0:00.00 kworker/R-slub_flushwq</span></div><div><span>      8 root       0 -20       0      0      0 I   0.0   0.0   0:00.00 kworker/R-netns</span></div><div><span>     11 root       0 -20       0      0      0 I   0.0   0.0   0:00.00 kworker/0:0H-events_highpri</span></div><div><span>     13 root       0 -20       0      0      0 I   0.0   0.0   0:00.00 kworker/R-mm_percpu_wq</span></div><div><span>     14 root      20   0       0      0      0 S   0.0   0.0   1:11.41 ksoftirqd/0</span></div><div><span>     15 root      20   0       0      0      0 I   0.0   0.0   9:49.81 rcu_preempt</span></div><div><span>     16 root      20   0       0      0      0 S   0.0   0.0   0:00.02 rcu_exp_par_gp_kthread_worker/1</span></div><div><span>     17 root      20   0       0      0      0 S   0.0   0.0   0:00.06 rcu_exp_gp_kthread_worker</span></div><div><span>     18 root      rt   0       0      0      0 S   0.0   0.0   0:00.95 migration/0</span></div><div><span>     19 root     -51   0       0      0      0 S   0.0   0.0   0:00.00 idle_inject/0</span></div><div><span>     20 root      20   0       0      0      0 S   0.0   0.0   0:00.00 cpuhp/0</span></div><div><span>     21 root      20   0       0      0      0 S   0.0   0.0   0:00.00 cpuhp/1</span></div><div><span>     22 root     -51   0       0      0      0 S   0.0   0.0   0:00.00 idle_inject/1</span></div><div><span>     23 root      rt   0       0      0      0 S   0.0   0.0   0:01.59 migration/1</span></div><div><span>     24 root      20   0       0      0      0 S   0.0   0.0   1:19.34 ksoftirqd/1</span></div><div><span>     26 root       0 -20       0      0      0 I   0.0   0.0   0:00.00 kworker/1:0H-events_highpri</span></div><div><span>     27 root      20   0       0      0      0 S   0.0   0.0   0:00.00 cpuhp/2</span></div><div><span>     28 root     -51   0       0      0      0 S   0.0   0.0   0:00.00 idle_inject/2</span></div><div><span>     29 root      rt   0       0      0      0 S   0.0   0.0   0:01.57 migration/2</span></div><div><span>     30 root      20   0       0      0      0 S   0.0   0.0   1:24.67 ksoftirqd/2</span></div><div><span>     32 root       0 -20       0      0      0 I   0.0   0.0   0:00.00 kworker/2:0H-events_highpri</span></div><div><span>     33 root      20   0       0      0      0 S   0.0   0.0   0:00.00 cpuhp/3</span></div><div><span>     34 root     -51   0       0      0      0 S   0.0   0.0   0:00.00 idle_inject/3</span></div><div><span>     35 root      rt   0       0      0      0 S   0.0   0.0   0:01.55 migration/3</span></div><div><span>     36 root      20   0       0      0      0 S   0.0   0.0   1:13.08 ksoftirqd/3</span></div><div><span>     38 root       0 -20       0      0      0 I   0.0   0.0   0:00.00 kworker/3:0H-events_highpri</span></div><div><span>     39 root      20   0       0      0      0 S   0.0   0.0   0:00.00 cpuhp/4</span></div><div><span>     40 root     -51   0       0      0      0 S   0.0   0.0   0:00.00 idle_inject/4</span></div><div><span>     41 root      rt   0       0      0      0 S   0.0   0.0   0:01.87 migration/4</span></div><div><span>     42 root      20   0       0      0      0 S   0.0   0.0   1:29.10 ksoftirqd/4</span></div><div><span>     44 root       0 -20       0      0      0 I   0.0   0.0   0:00.00 kworker/4:0H-events_highpri</span></div><div><span>     45 root      20   0       0      0      0 S   0.0   0.0   0:00.00 cpuhp/5</span></div><div><span>     46 root     -51   0       0      0      0 S   0.0   0.0   0:00.00 idle_inject/5</span></div><div><span>     47 root      rt   0       0      0      0 S   0.0   0.0   0:01.57 migration/5</span></div><div><span>     48 root      20   0       0      0      0 S   0.0   0.0   1:06.25 ksoftirqd/5</span></div><div><span>     50 root       0 -20       0      0      0 I   0.0   0.0   0:00.00 kworker/5:0H-events_highpri</span></div><div><span>     51 root      20   0       0      0      0 S   0.0   0.0   0:00.00 cpuhp/6</span></div><div><span>     52 root     -51   0       0      0      0 S   0.0   0.0   0:00.00 idle_inject/6</span></div><div><span>     53 root      rt   0       0      0      0 S   0.0   0.0   0:01.60 migration/6</span></div><div><span>     54 root      20   0       0      0      0 S   0.0   0.0   1:15.52 ksoftirqd/6</span></div></div></div>
</section>
</body></html>
